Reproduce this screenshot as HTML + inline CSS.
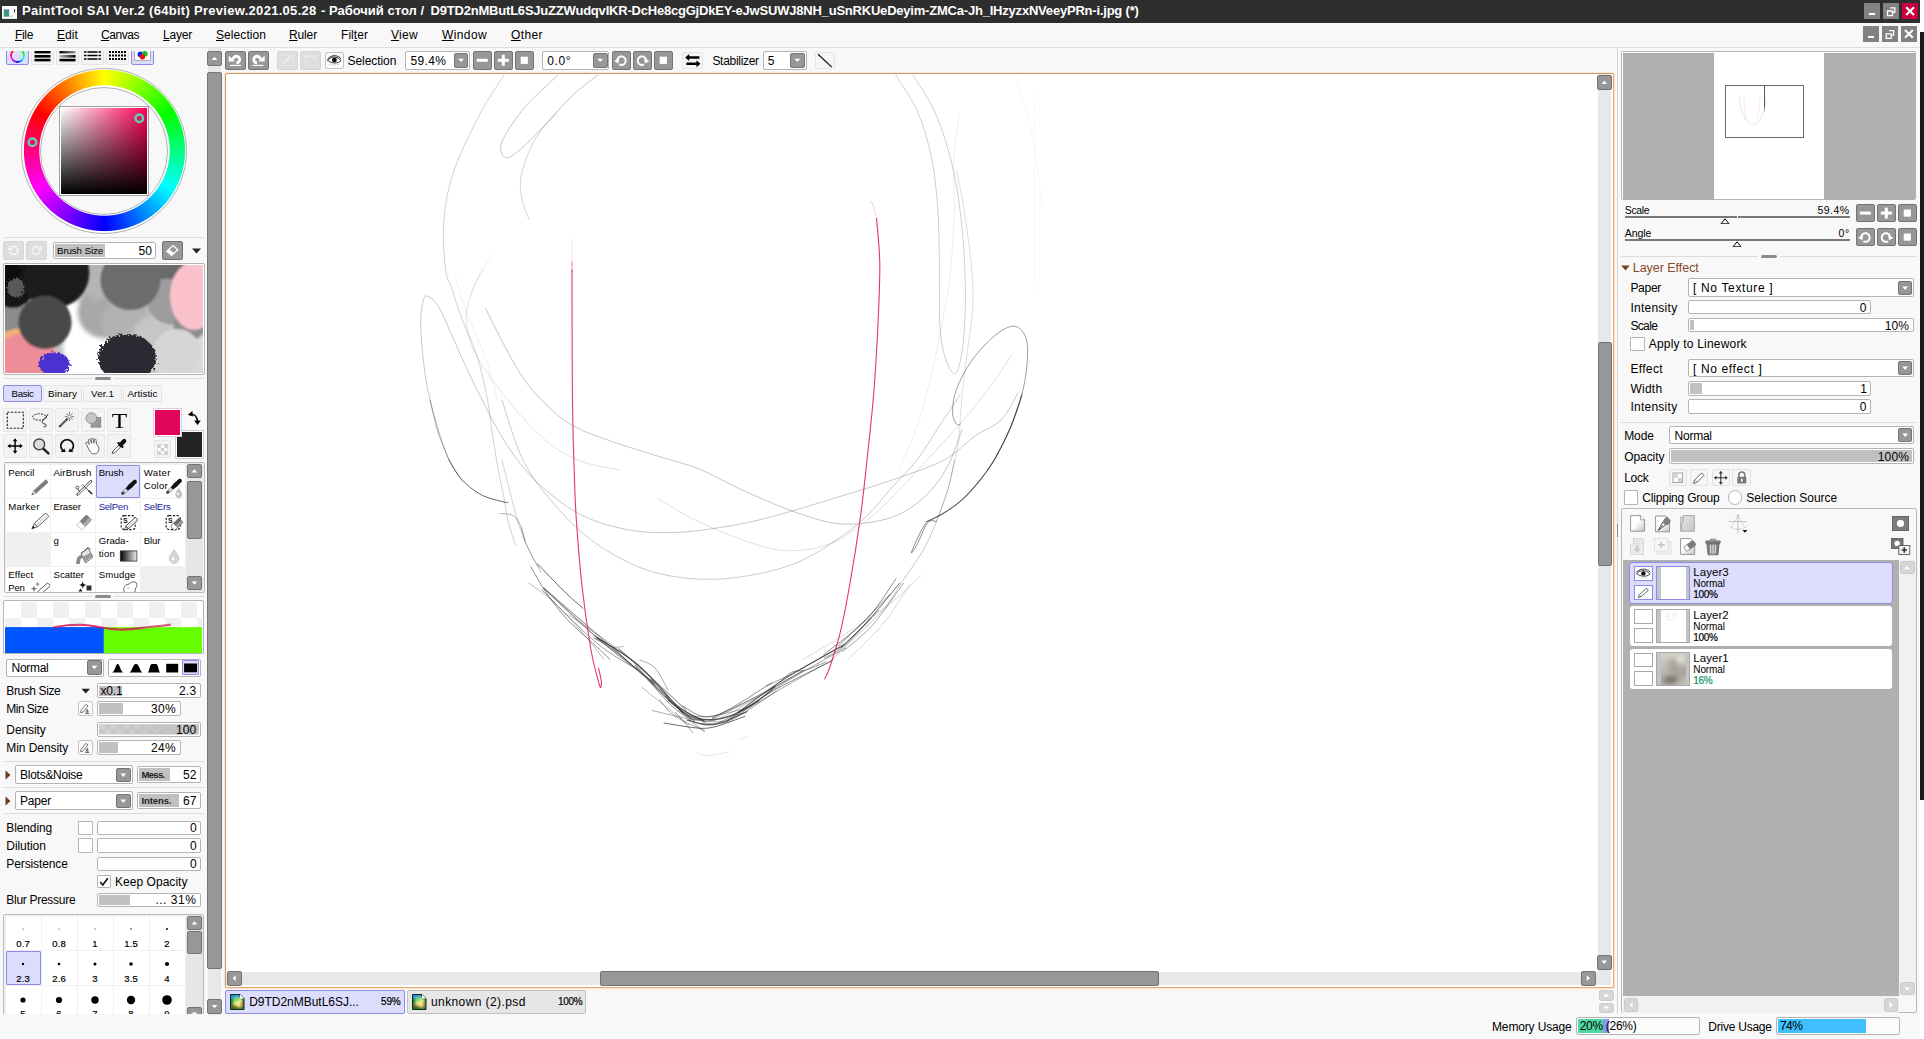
<!DOCTYPE html>
<html><head><meta charset="utf-8"><title>PaintTool SAI</title>
<style>
*{box-sizing:border-box;margin:0;padding:0}
html,body{width:1924px;height:1039px;overflow:hidden;background:#f8f8f8;font-family:"Liberation Sans",sans-serif;font-size:12px;color:#000}
div,svg{position:absolute}
.t{white-space:nowrap;line-height:14px;font-size:12px}
.b{font-weight:bold}
.btn{background:#979797;border:1px solid #747474;border-radius:2px}
.btnl{background:#dedede;border:1px solid #d6d6d6;border-radius:2px}
.sl{background:#fff;border:1px solid #b4b4b4;border-radius:2px}
.slf{background:#c0c0c0}
.dd{background:#fff;border:1px solid #b4b4b4;border-radius:2px}
.cb{background:#fff;border:1px solid #b4b4b4;border-radius:1px}
.sep{background:#dcdcdc}
.sel{background:#dcdcfc;border:1px solid #8c8ce6;border-radius:2px}
.tb{background:#f4f4f4;border:1px solid #e4e4e4;border-radius:2px}
</style></head>
<body>
<!-- sec_top -->
<div class="" style="left:0px;top:0px;width:1920px;height:22.5px;background:#2e2e2e"></div>
<svg style="left:1.9px;top:5.9px;" width="15" height="12.9" viewBox="0 0 15 12.9"><defs><linearGradient id="aig" x1="0" y1="0" x2="0" y2="1"><stop offset="0" stop-color="#4a80a8"/><stop offset=".5" stop-color="#3a9a80"/><stop offset="1" stop-color="#3aa070"/></linearGradient></defs><rect width="15" height="12.900" fill="#fafafa"/><rect x="1.800" y="3.400" width="5.400" height="7.300" fill="url(#aig)"/><rect x="12.100" y="3.100" width="1" height="3.500" fill="#333"/><rect x="8" y="9.500" width="3" height="1.200" fill="#ccc"/></svg>
<div class="t " style="left:22px;top:3px;font-size:13px;letter-spacing:0.294px;font-weight:bold;color:#fff;line-height:16px">PaintTool SAI Ver.2 (64bit) Preview.2021.05.28</div>
<div class="t " style="left:321px;top:3px;font-size:13px;letter-spacing:0.001px;font-weight:bold;color:#fff;line-height:16px">- Рабочий стол /</div>
<div class="t " style="left:430.6px;top:3px;font-size:13px;letter-spacing:-0.207px;font-weight:bold;color:#fff;line-height:16px">D9TD2nMButL6SJuZZWudqvIKR-DcHe8cgGjDkEY-eJwSUWJ8NH_uSnRKUeDeyim-ZMCa-Jh_IHzyzxNVeeyPRn-i.jpg (*)</div>
<div class="" style="left:1864px;top:3px;width:16.2px;height:16px;background:#828282"></div>
<div class="" style="left:1883px;top:3px;width:16.2px;height:16px;background:#828282"></div>
<div class="" style="left:1902px;top:3px;width:16.2px;height:16px;background:#c9003f"></div>
<div class="" style="left:1869px;top:12.8px;width:6.2px;height:2.5px;background:#fff"></div>
<svg style="left:1883px;top:3px;" width="16.2" height="16" viewBox="0 0 16.2 16"><path d="M7.200 4.800h4.600v4.600h-1.800M4.500 8h5v4.600h-5z" fill="none" stroke="#fff" stroke-width="1.300"/></svg>
<svg style="left:1902px;top:3px;" width="16.2" height="16" viewBox="0 0 16.2 16"><path d="M4.200 4.300l7.800 7.800M12 4.300l-7.800 7.800" stroke="#fff" stroke-width="2.100"/></svg>
<div class="" style="left:0px;top:22.5px;width:1920px;height:24.5px;background:#f8f8f8"></div>
<div class="" style="left:0px;top:47px;width:1920px;height:1px;background:#dedede"></div>
<div class="t " style="left:15px;top:28px;font-size:12px;letter-spacing:-0.334px;line-height:15px"><u>F</u>ile</div>
<div class="t " style="left:57px;top:28px;font-size:12px;letter-spacing:0.081px;line-height:15px"><u>E</u>dit</div>
<div class="t " style="left:101px;top:28px;font-size:12px;letter-spacing:-0.448px;line-height:15px"><u>C</u>anvas</div>
<div class="t " style="left:163px;top:28px;font-size:12px;letter-spacing:-0.203px;line-height:15px"><u>L</u>ayer</div>
<div class="t " style="left:216px;top:28px;font-size:12px;letter-spacing:0.071px;line-height:15px"><u>S</u>election</div>
<div class="t " style="left:289px;top:28px;font-size:12px;letter-spacing:-0.135px;line-height:15px"><u>R</u>uler</div>
<div class="t " style="left:341px;top:28px;font-size:12px;letter-spacing:0.056px;line-height:15px">Fil<u>t</u>er</div>
<div class="t " style="left:391px;top:28px;font-size:12px;letter-spacing:0.302px;line-height:15px"><u>V</u>iew</div>
<div class="t " style="left:442px;top:28px;font-size:12px;letter-spacing:0.387px;line-height:15px"><u>W</u>indow</div>
<div class="t " style="left:511px;top:28px;font-size:12px;letter-spacing:0.398px;line-height:15px"><u>O</u>ther</div>
<div class="" style="left:1863.1px;top:26.2px;width:15.9px;height:15.6px;background:#828282"></div>
<div class="" style="left:1882.2px;top:26.2px;width:15.9px;height:15.6px;background:#828282"></div>
<div class="" style="left:1901.1px;top:26.2px;width:15.9px;height:15.6px;background:#828282"></div>
<div class="" style="left:1868px;top:35.5px;width:6.2px;height:2.5px;background:#fff"></div>
<svg style="left:1882.2px;top:26.2px;" width="15.9" height="15.6" viewBox="0 0 15.9 15.6"><path d="M7 4.600h4.600v4.600h-1.800M4.300 7.800h5v4.600h-5z" fill="none" stroke="#fff" stroke-width="1.300"/></svg>
<svg style="left:1901.1px;top:26.2px;" width="15.9" height="15.6" viewBox="0 0 15.9 15.6"><path d="M4 4l7.800 7.800M11.800 4l-7.800 7.800" stroke="#fff" stroke-width="2.100"/></svg>
<div class="" style="left:1920px;top:0px;width:4px;height:1039px;background:#fff"></div>
<div class="" style="left:1920.1px;top:32px;width:4px;height:767.7px;background:#1a1a1a"></div>
<!-- sec_left -->
<div style="left:0;top:51px;width:206px;height:963px;overflow:hidden"><div style="left:0;top:-51px;width:206px;height:1039px">
<div class="sel" style="left:6px;top:43px;width:23px;height:22px;"></div>
<div class="tb" style="left:31px;top:43px;width:23px;height:22px;"></div>
<div class="tb" style="left:56px;top:43px;width:23px;height:22px;"></div>
<div class="tb" style="left:81px;top:43px;width:23px;height:22px;"></div>
<div class="tb" style="left:106px;top:43px;width:23px;height:22px;"></div>
<div class="sel" style="left:131px;top:43px;width:23px;height:22px;"></div>
<div class="" style="left:10px;top:47.5px;width:15px;height:15px;border-radius:50%;background:conic-gradient(#ff0,#0f0,#0ff,#00f,#f0f,#f00,#ff0);-webkit-mask-image:radial-gradient(circle closest-side,transparent 5.300px,#000 5.900px);mask-image:radial-gradient(circle closest-side,transparent 5.300px,#000 5.900px)"></div>
<svg style="left:34px;top:49.7px;" width="17" height="12" viewBox="0 0 17 12"><defs><linearGradient id="g1" x1="0" x2="1"><stop offset="0" stop-color="#000"/><stop offset="1" stop-color="#000"/></linearGradient></defs><rect x="0.5" y="1" width="16" height="2.4" fill="#000"/><rect x="0.5" y="5" width="16" height="2.6" fill="#000"/><rect x="0.5" y="8.8" width="16" height="2.6" fill="#000"/></svg>
<svg style="left:59px;top:49.7px;" width="17" height="12" viewBox="0 0 17 12"><defs><linearGradient id="g2" x1="0" x2="1"><stop offset="0" stop-color="#000"/><stop offset="1" stop-color="#999"/></linearGradient><linearGradient id="g3" x1="0" x2="1"><stop offset="0" stop-color="#bbb"/><stop offset="1" stop-color="#000"/></linearGradient></defs><rect x="0.5" y="1" width="16" height="2.4" fill="url(#g2)"/><rect x="0.5" y="5" width="16" height="2.6" fill="url(#g3)"/><rect x="0.5" y="8.8" width="16" height="2.6" fill="#000"/></svg>
<svg style="left:84px;top:49.7px;" width="17" height="12" viewBox="0 0 17 12"><g stroke="#000" stroke-width="1.6"><path d="M0 2h17M0 5.5h17M0 9h17" stroke-dasharray="2.5 1 10 1 2.5 0"/></g></svg>
<svg style="left:109px;top:49.7px;" width="17" height="12" viewBox="0 0 17 12"><g fill="#000"><rect x="0" y="1" width="2" height="2"/><rect x="3" y="1" width="2" height="2"/><rect x="6" y="1" width="2" height="2"/><rect x="9" y="1" width="2" height="2"/><rect x="12" y="1" width="2" height="2"/><rect x="15" y="1" width="2" height="2"/><rect x="0" y="4.5" width="2" height="2"/><rect x="3" y="4.5" width="2" height="2"/><rect x="6" y="4.5" width="2" height="2"/><rect x="9" y="4.5" width="2" height="2"/><rect x="12" y="4.5" width="2" height="2"/><rect x="15" y="4.5" width="2" height="2"/><rect x="0" y="8" width="2" height="2"/><rect x="3" y="8" width="2" height="2"/><rect x="6" y="8" width="2" height="2"/><rect x="9" y="8" width="2" height="2"/><rect x="12" y="8" width="2" height="2"/><rect x="15" y="8" width="2" height="2"/></g></svg>
<svg style="left:134px;top:45px;" width="17" height="16.5" viewBox="0 0 17 16.5"><defs><filter id="rgbb"><feGaussianBlur stdDeviation=".5"/></filter></defs><rect x=".5" y="0" width="16" height="15.300" fill="#fff" stroke="#9a9a9a" stroke-width=".8"/><g filter="url(#rgbb)"><circle cx="6.500" cy="9.300" r="2.900" fill="#0020ee"/><circle cx="10.800" cy="8.800" r="2.900" fill="#18c030"/><circle cx="8.400" cy="11.800" r="2.700" fill="#f01010"/></g></svg>
<div class="" style="left:21.5px;top:68.0px;width:165.0px;height:165.0px;border-radius:50%;background:#fff"></div><div class="" style="left:40.5px;top:87.0px;width:127.0px;height:127.0px;border-radius:50%;background:#f8f8f8"></div><div class="" style="left:21.5px;top:68.0px;width:165.0px;height:165.0px;border-radius:50%;background:conic-gradient(from 0deg,#ffff00 0deg,#00ff00 60deg,#00ffff 120deg,#0000ff 180deg,#ff00ff 240deg,#ff0000 300deg,#ffff00 360deg);-webkit-mask-image:radial-gradient(circle closest-side,transparent 64.7px,#000 65.7px,#000 80.1px,transparent 81.1px);mask-image:radial-gradient(circle closest-side,transparent 64.7px,#000 65.7px,#000 80.1px,transparent 81.1px)"></div><div class="" style="left:21.0px;top:67.5px;width:166.0px;height:166.0px;border-radius:50%;border:1px solid #a8a8a8;opacity:.9"></div><div class="" style="left:40.0px;top:86.5px;width:128.0px;height:128.0px;border-radius:50%;border:1px solid #a8a8a8;opacity:.9"></div><div class="" style="left:59px;top:106px;width:90px;height:90px;background:#fff;border:1px solid #a0a0a0"></div><div class="" style="left:61px;top:108px;width:86px;height:86px;background:linear-gradient(to bottom,rgba(0,0,0,0) 0%,rgba(0,0,0,.55) 55%,#000 100%),linear-gradient(to right,#fff 0%,#ff0058 100%)"></div><svg style="left:132px;top:111px;" width="14" height="14" viewBox="0 0 14 14"><circle cx="7.300" cy="7.300" r="3.800" fill="none" stroke="#5ccfae" stroke-width="2.500"/></svg><svg style="left:25px;top:135px;" width="14" height="14" viewBox="0 0 14 14"><circle cx="7.400" cy="7.300" r="3.800" fill="none" stroke="#5ccfae" stroke-width="2.500"/></svg>
<div class="sep" style="left:4px;top:237.2px;width:200px;height:1px;"></div>
<div class="btnl" style="left:3.3px;top:241.1px;width:20.4px;height:18.5px;"></div>
<div class="btnl" style="left:26.3px;top:241.1px;width:20.4px;height:18.5px;"></div>
<svg style="left:6px;top:243px;" width="15" height="14" viewBox="0 0 15 14"><path d="M4 8.5a4 4 0 1 0 1.5-4.2M3.2 3.2v3h3" fill="none" stroke="#f7f7f7" stroke-width="1.5"/></svg>
<svg style="left:29px;top:243px;" width="15" height="14" viewBox="0 0 15 14"><path d="M11 8.5a4 4 0 1 1-1.5-4.2M11.8 3.2v3h-3" fill="none" stroke="#f7f7f7" stroke-width="1.5"/></svg>
<div class="sl" style="left:53px;top:242.2px;width:103px;height:16.5px;"></div>
<div class="slf" style="left:55px;top:244.2px;width:50px;height:12.5px;"></div>
<div class="t " style="left:57px;top:243.6px;font-size:9.8px;letter-spacing:-0.139px;line-height:14px">Brush Size</div>
<div class="t " style="left:152px;top:243.9px;transform:translateX(-100%);font-size:12px;letter-spacing:0.077px;margin-right:-0.077px;">50</div>
<div class="btn" style="left:162.1px;top:241.1px;width:20.8px;height:18.6px;"></div>
<svg style="left:162.1px;top:241.1px;" width="20.8" height="18.6" viewBox="0 0 20.8 18.6"><path d="M4.800 10.200l6.300-5.600 4.800 4.200-6.300 5.600z" fill="none" stroke="#fff" stroke-width="1.300"/><path d="M4.800 10.200l2.400-2.100 4.800 4.200-2.400 2.100z" fill="#fff"/></svg>
<svg style="left:191px;top:246.9px;" width="11" height="8" viewBox="0 0 11 8"><path d="M1 1.5h9l-4.5 5z" fill="#222"/></svg>
<div class="" style="left:3px;top:263px;width:202px;height:112px;background:#fff;border:1px solid #b4b4b4;border-radius:2px"></div>
<svg style="left:5px;top:265px;" width="198" height="108" viewBox="0 0 198 108"><defs><filter id="bl6" x="-30%" y="-30%" width="160%" height="160%"><feGaussianBlur stdDeviation="2.200"/></filter><filter id="bl2" x="-30%" y="-30%" width="160%" height="160%"><feGaussianBlur stdDeviation="1.100"/></filter>
<filter id="rough" x="-20%" y="-20%" width="140%" height="140%"><feTurbulence type="fractalNoise" baseFrequency="0.450" numOctaves="2" seed="3"/><feDisplacementMap in="SourceGraphic" scale="8"/></filter></defs>
<rect width="198" height="108" fill="#c4c4c4"/>
<g filter="url(#bl6)">
<rect x="60" y="36" width="50" height="80" fill="#ffffff"/><ellipse cx="120" cy="70" rx="30" ry="14" fill="#e6e6e6"/>
<ellipse cx="84" cy="80" rx="26" ry="34" fill="#ffffff"/>
<circle cx="99" cy="47" r="26.500" fill="#a8a8a8"/>
<circle cx="122" cy="58" r="25" fill="#b2b2b2"/>
<ellipse cx="92" cy="14" rx="12" ry="22" fill="#b4b4b4"/>
<circle cx="175" cy="88" r="30" fill="#dadada"/>
<circle cx="150" cy="72" r="22" fill="#c6c6c6"/>
</g>
<g filter="url(#bl2)">
<circle cx="166" cy="35.400" r="24" fill="#9c9c9c"/>
<circle cx="184.400" cy="59.700" r="16" fill="#8e8e8e"/>
<circle cx="172" cy="88" r="24" fill="#d6d6d6"/>
<rect x="140" y="-4" width="40" height="18" fill="#6a6a6a"/>
<circle cx="125.500" cy="15" r="30" fill="#6c6c6c"/>
<ellipse cx="189" cy="30.800" rx="24" ry="34" fill="#fbc2cd"/>
<rect x="-4" y="40" width="22" height="30" fill="#8c8c8c"/>
<circle cx="17" cy="99" r="36" fill="#f0b274"/>
<circle cx="20" cy="103" r="35" fill="#ee8c98"/>
<circle cx="7.700" cy="22" r="21" fill="#151515"/>
<circle cx="49.300" cy="8" r="35" fill="#1c1c1c"/>
<circle cx="4" cy="4" r="14" fill="#0c0c0c" filter="url(#bl6)"/>
<circle cx="40" cy="57.400" r="26.600" fill="#484848"/>
</g>
<g filter="url(#rough)"><ellipse cx="10.600" cy="22.700" rx="8.500" ry="10" fill="#595959"/><ellipse cx="49.300" cy="99" rx="15.500" ry="11.500" fill="#4a30d0"/><ellipse cx="122" cy="93" rx="29" ry="24" fill="#2b2b33"/></g>
</svg>
<div class="sep" style="left:4px;top:378px;width:200px;height:1px;"></div>
<div class="" style="left:95px;top:377px;width:16px;height:3px;background:#8c8c8c;border-radius:1.500px;box-shadow:3px 0 0 #f8f8f8,-3px 0 0 #f8f8f8"></div>
<div class="sel" style="left:3px;top:385px;width:39px;height:17px;"></div>
<div class="t " style="left:11.5px;top:386.7px;font-size:9.8px;letter-spacing:-0.393px;line-height:14px">Basic</div>
<div class="tb" style="left:43px;top:385px;width:39px;height:17px;"></div>
<div class="t " style="left:48.0px;top:386.7px;font-size:9.8px;letter-spacing:0.204px;line-height:14px">Binary</div>
<div class="tb" style="left:83px;top:385px;width:39px;height:17px;"></div>
<div class="t " style="left:91.0px;top:386.7px;font-size:9.8px;letter-spacing:0.132px;line-height:14px">Ver.1</div>
<div class="tb" style="left:123px;top:385px;width:39px;height:17px;"></div>
<div class="t " style="left:127.5px;top:386.7px;font-size:9.8px;letter-spacing:0.075px;line-height:14px">Artistic</div>
<div class="tb" style="left:3.4px;top:408.4px;width:24px;height:24px;background:#f3f3f3;border-color:#e6e6e6"></div><div class="tb" style="left:29.4px;top:408.4px;width:24px;height:24px;background:#f3f3f3;border-color:#e6e6e6"></div><div class="tb" style="left:55.4px;top:408.4px;width:24px;height:24px;background:#f3f3f3;border-color:#e6e6e6"></div><div class="tb" style="left:81.4px;top:408.4px;width:24px;height:24px;background:#f3f3f3;border-color:#e6e6e6"></div><div class="tb" style="left:107.4px;top:408.4px;width:24px;height:24px;background:#f3f3f3;border-color:#e6e6e6"></div><div class="tb" style="left:3.4px;top:434.4px;width:24px;height:24px;background:#f3f3f3;border-color:#e6e6e6"></div><div class="tb" style="left:29.4px;top:434.4px;width:24px;height:24px;background:#f3f3f3;border-color:#e6e6e6"></div><div class="tb" style="left:55.4px;top:434.4px;width:24px;height:24px;background:#f3f3f3;border-color:#e6e6e6"></div><div class="tb" style="left:81.4px;top:434.4px;width:24px;height:24px;background:#f3f3f3;border-color:#e6e6e6"></div><div class="tb" style="left:107.4px;top:434.4px;width:24px;height:24px;background:#f3f3f3;border-color:#e6e6e6"></div><svg style="left:3.4px;top:408.4px;" width="24" height="24" viewBox="0 0 24 24"><rect x="4.3" y="4.3" width="16" height="16" fill="none" stroke="#222" stroke-width="1.1" stroke-dasharray="2.2 1.4"/></svg><svg style="left:29.4px;top:408.4px;" width="24" height="24" viewBox="0 0 24 24"><ellipse cx="10.4" cy="9" rx="6.8" ry="3.2" fill="none" stroke="#222" stroke-width="1" stroke-dasharray="2 1.2"/><path d="M19 6.2C17.5 9 15.5 10.5 14 12.5c-1.6 2 -0.5 3 1.2 3.3 1.6 .3 2.6 1.4 1.6 2.6-.5.6-1.4.6-2.2.3" fill="none" stroke="#222" stroke-width="1"/></svg><svg style="left:55.4px;top:408.4px;" width="24" height="24" viewBox="0 0 24 24"><path d="M4.3 18.9L12.6 10.6" stroke="#222" stroke-width="2"/><path d="M5.5 17.7l6-6" stroke="#bbb" stroke-width=".7"/><g stroke="#555" stroke-width=".8"><path d="M14.4 4v2.8M14.4 10.6v2.6M9.8 8.7h2.6M16.4 8.7h2.8M11.3 5.6l1.6 1.6M17.5 5.6l-1.6 1.6M17.5 11.8l-1.6-1.6"/></g><circle cx="14.4" cy="8.7" r="1.5" fill="#fff" stroke="#666" stroke-width=".7"/></svg><svg style="left:81.4px;top:408.4px;" width="24" height="24" viewBox="0 0 24 24"><rect x="10.2" y="9.6" width="9.5" height="9.5" fill="#999" stroke="#7a7a7a" stroke-width=".8"/><circle cx="10.4" cy="10.2" r="5.4" fill="#c6c6c6" stroke="#8a8a8a" stroke-width=".9"/></svg><div class="t" style="left:113.100px;top:408.900px;font-family:'Liberation Serif',serif;font-size:21.500px;line-height:24px;color:#000;transform:scaleX(1.180);transform-origin:50% 50%">T</div><svg style="left:3.4px;top:434.4px;" width="24" height="24" viewBox="0 0 24 24"><path d="M12.100 6v12M6.100 12h12" stroke="#000" stroke-width="1.400"/><path d="M12.100 4.300l2.300 3h-4.600zM12.100 19.700l2.300-3h-4.600zM4.400 12l3-2.300v4.600zM19.800 12l-3-2.300v4.600z" fill="#000"/></svg><svg style="left:29.4px;top:434.4px;" width="24" height="24" viewBox="0 0 24 24"><path d="M14 14.4l5.4 5" stroke="#222" stroke-width="2.6" stroke-linecap="round"/><circle cx="10.2" cy="10.4" r="5.4" fill="#dcdcdc" stroke="#444" stroke-width="1.4"/></svg><svg style="left:55.4px;top:434.4px;" width="24" height="24" viewBox="0 0 24 24"><path d="M8.900 17.300A6.300 6.300 0 1 1 15.300 17.300" fill="none" stroke="#111" stroke-width="1.800"/><path d="M5.600 17.900l5.200.2-1.300-3.700zM18.600 17.900l-5.200.2 1.300-3.700z" fill="#111"/></svg><svg style="left:81.4px;top:434.4px;" width="24" height="24" viewBox="0 0 24 24"><path d="M6 11.5c-1-1.5-1.5-3 -.6-3.4 1-.4 2.2 1.4 3 2.4L7.4 6.6c-.4-1.2 1.2-1.8 1.8-.6l1.6 3.4-.8-4.2c-.2-1.2 1.5-1.5 1.9-.3l1.1 4.2.1-3.5c0-1.1 1.6-1.1 1.8 0l.6 4.4c1.6 1.6 2.6 3.6 2.3 5.8-.2 1.8-1.4 3.4-3.4 4-1.8.5-3.6-.2-4.8-1.6C8 16.400 7 13.400 6 11.500z" fill="#fff" stroke="#555" stroke-width=".9" stroke-linejoin="round"/></svg><svg style="left:107.4px;top:434.4px;" width="24" height="24" viewBox="0 0 24 24"><path d="M5 19.5l1-2.5 6.5-6.5 1.8 1.8L7.800 18.800z" fill="#fff" stroke="#444" stroke-width=".9"/><path d="M11.5 9l4 4" stroke="#111" stroke-width="2.2" stroke-linecap="round"/><path d="M13.6 10.700l3.600-3.600" stroke="#111" stroke-width="4.200" stroke-linecap="round"/></svg><div class="" style="left:175.4px;top:430.2px;width:28.4px;height:28.4px;background:#fff;border:1px solid #cfcfcf"></div><div class="" style="left:177.4px;top:432.2px;width:24.4px;height:24.4px;background:#232323"></div><div class="" style="left:153.4px;top:408.3px;width:28.4px;height:28.4px;background:#fff;border:1px solid #dccfd5"></div><div class="" style="left:155.4px;top:410.3px;width:24.4px;height:24.4px;background:#e0055a"></div><svg style="left:186px;top:409px;" width="16" height="17" viewBox="0 0 16 17"><path d="M3.500 5.500C8 4.500 11.500 7.500 11.500 12.500" fill="none" stroke="#000" stroke-width="1.500"/><path d="M1.800 5.800l4.600-3.800.6 5.600zM11.500 16l-3.300-4.600h6.600z" fill="#000"/></svg><div class="tb" style="left:154px;top:440.4px;width:17px;height:17.6px;background:#f4f4f4"></div><svg style="left:157px;top:444px;" width="11" height="11" viewBox="0 0 11 11"><rect width="11" height="11" fill="#fff" stroke="#bbb" stroke-width="1"/><rect x="0.5" y="0.5" width="3.4" height="3.4" fill="#ccc"/><rect x="7.200" y="0.500" width="3.300" height="3.400" fill="#ccc"/><rect x="3.900" y="3.900" width="3.300" height="3.300" fill="#ccc"/><rect x="0.500" y="7.200" width="3.400" height="3.300" fill="#ccc"/><rect x="7.200" y="7.200" width="3.300" height="3.300" fill="#ccc"/></svg><div class="" style="left:3.5px;top:462.4px;width:201px;height:130.2px;background:#f8f8f8;border:1px solid #b9b9b9;border-radius:2px"></div><div style="left:4.5px;top:463.4px;width:199px;height:128.200px;overflow:hidden;background:#f0f0f0"><div style="left:-4.5px;top:-463.4px;width:206px;height:700px"><div class="" style="left:5.5px;top:464.5px;width:44.5px;height:33.3px;background:#fff"></div><div class="" style="left:50.7px;top:464.5px;width:44.5px;height:33.3px;background:#fff"></div><div class="" style="left:95.9px;top:464.5px;width:44.5px;height:33.3px;background:#fff"></div><div class="" style="left:140.9px;top:464.5px;width:44.5px;height:33.3px;background:#fff"></div><div class="" style="left:5.5px;top:498.5px;width:44.5px;height:33.3px;background:#fff"></div><div class="" style="left:50.7px;top:498.5px;width:44.5px;height:33.3px;background:#fff"></div><div class="" style="left:95.9px;top:498.5px;width:44.5px;height:33.3px;background:#fff"></div><div class="" style="left:140.9px;top:498.5px;width:44.5px;height:33.3px;background:#fff"></div><div class="" style="left:50.7px;top:532.5px;width:44.5px;height:33.3px;background:#fff"></div><div class="" style="left:95.9px;top:532.5px;width:44.5px;height:33.3px;background:#fff"></div><div class="" style="left:140.9px;top:532.5px;width:44.5px;height:33.3px;background:#fff"></div><div class="" style="left:5.5px;top:566.5px;width:44.5px;height:33.3px;background:#fff"></div><div class="" style="left:50.7px;top:566.5px;width:44.5px;height:33.3px;background:#fff"></div><div class="" style="left:95.9px;top:566.5px;width:44.5px;height:33.3px;background:#fff"></div><div class="sel" style="left:95.9px;top:464.5px;width:44.5px;height:33.3px;border-radius:1px"></div><div class="t " style="left:8.3px;top:466.2px;font-size:9.6px;letter-spacing:-0.024px;line-height:13px;color:#000">Pencil</div><div class="t " style="left:53.5px;top:466.2px;font-size:9.6px;letter-spacing:0.149px;line-height:13px;color:#000">AirBrush</div><div class="t " style="left:98.7px;top:466.2px;font-size:9.6px;letter-spacing:-0.015px;line-height:13px;color:#000">Brush</div><div class="t " style="left:143.70000000000002px;top:466.2px;font-size:9.6px;letter-spacing:0.351px;line-height:13px;color:#000">Water</div><div class="t " style="left:143.70000000000002px;top:479.2px;font-size:9.6px;letter-spacing:0.272px;line-height:13px;color:#000">Color</div><div class="t " style="left:8.3px;top:500.2px;font-size:9.6px;letter-spacing:0.239px;line-height:13px;color:#000">Marker</div><div class="t " style="left:53.5px;top:500.2px;font-size:9.6px;letter-spacing:-0.162px;line-height:13px;color:#000">Eraser</div><div class="t " style="left:98.7px;top:500.2px;font-size:9.6px;letter-spacing:-0.276px;line-height:13px;color:#1c1c9c">SelPen</div><div class="t " style="left:143.70000000000002px;top:500.2px;font-size:9.6px;letter-spacing:-0.246px;line-height:13px;color:#1c1c9c">SelErs</div><div class="t " style="left:53.5px;top:534.2px;font-size:9.600px;line-height:13px;color:#000">g</div><div class="t " style="left:98.7px;top:534.2px;font-size:9.6px;letter-spacing:0.021px;line-height:13px;color:#000">Grada-</div><div class="t " style="left:98.7px;top:547.2px;font-size:9.6px;letter-spacing:0.206px;line-height:13px;color:#000">tion</div><div class="t " style="left:143.70000000000002px;top:534.2px;font-size:9.6px;letter-spacing:-0.068px;line-height:13px;color:#000">Blur</div><div class="t " style="left:8.3px;top:568.2px;font-size:9.6px;letter-spacing:0.105px;line-height:13px;color:#000">Effect</div><div class="t " style="left:8.3px;top:581.2px;font-size:9.6px;letter-spacing:-0.260px;line-height:13px;color:#000">Pen</div><div class="t " style="left:53.5px;top:568.2px;font-size:9.6px;letter-spacing:0.013px;line-height:13px;color:#000">Scatter</div><div class="t " style="left:98.7px;top:568.2px;font-size:9.6px;letter-spacing:0.174px;line-height:13px;color:#000">Smudge</div><svg style="left:5.5px;top:464.5px;" width="44.5" height="33.3" viewBox="0 0 44.5 33.3"><g transform="translate(25.600 29.900) rotate(-42)"><path d="M0 0l4.500-1.700v3.400z" fill="#e8e8e8" stroke="#666" stroke-width=".5"/><path d="M0 0l1.800-.7v1.400z" fill="#222"/><rect x="4.500" y="-1.700" width="16.500" height="3.400" fill="#a8a8a8"/><path d="M4.500 -0.500h16.500M4.500 0.700h16.500" stroke="#333" stroke-width=".6"/><path d="M4.500 -1.700h16.500M4.500 1.700h16.500" stroke="#555" stroke-width=".55"/></g></svg><svg style="left:50.7px;top:464.5px;" width="44.5" height="33.3" viewBox="0 0 44.5 33.3"><path d="M26.600 29.400l13.300-13" stroke="#333" stroke-width="2.600" stroke-linecap="round"/><path d="M26.800 29.200l13-12.700" stroke="#fff" stroke-width="1.200" stroke-linecap="round"/><path d="M33.300 21.500l7.300 7" stroke="#333" stroke-width=".9" stroke-linecap="round"/><path d="M38 26l2.800 2.700" stroke="#222" stroke-width="1.500" stroke-linecap="round"/><circle cx="26.400" cy="22.600" r="1.500" fill="#fff" stroke="#333" stroke-width=".8"/><path d="M27 24l1.500 2.800M30 20.300l1 1M31.800 19.300l.3 1.400" stroke="#333" stroke-width=".8"/></svg><svg style="left:95.9px;top:464.5px;" width="44.5" height="33.3" viewBox="0 0 44.5 33.3"><g transform="translate(25.6 29.4) rotate(-43.500)"><rect x="0" y="-1.500" width="3.500" height="3" rx="1.400" fill="#444"/><rect x="3.300" y="-1.600" width="4" height="3.200" fill="#d8d8d8" stroke="#555" stroke-width=".5"/><path d="M7.300 -1.700L12 -2.300L19.500 -1.900Q21 0 19.500 1.900L12 2.300L7.300 1.700z" fill="#111"/></g></svg><svg style="left:140.9px;top:464.5px;" width="44.5" height="33.3" viewBox="0 0 44.5 33.3"><g transform="translate(25.6 28.4) rotate(-43.500)"><rect x="0" y="-1.500" width="3.500" height="3" rx="1.400" fill="#444"/><rect x="3.300" y="-1.600" width="4" height="3.200" fill="#d8d8d8" stroke="#555" stroke-width=".5"/><path d="M7.300 -1.700L12 -2.300L19.500 -1.900Q21 0 19.500 1.900L12 2.300L7.300 1.700z" fill="#111"/></g><path d="M37.700 23.500c1.700 2.500 3 4.200 3 6a3 3 0 0 1-6 0c0-1.800 1.300-3.500 3-6z" fill="#c4c4c4" stroke="#aaa" stroke-width=".6"/><ellipse cx="36.800" cy="29" rx="1" ry="1.500" fill="#fff"/></svg><svg style="left:5.5px;top:498.5px;" width="44.5" height="33.3" viewBox="0 0 44.5 33.3"><g transform="translate(25.800 29.800) rotate(-42)"><path d="M0 0l5.500-2.400v4.800z" fill="#fff" stroke="#444" stroke-width=".7"/><path d="M0 0l3-1.300v2.600z" fill="#111"/><rect x="5.500" y="-2.400" width="15.500" height="4.800" rx="1" fill="#fff" stroke="#444" stroke-width=".8"/><path d="M6 .3h14.500" stroke="#999" stroke-width=".6"/></g></svg><svg style="left:50.7px;top:498.5px;" width="44.5" height="33.3" viewBox="0 0 44.5 33.3"><g transform="translate(25.500 25.900) rotate(-46)"><rect x="0" y="0" width="14.100" height="7.500" rx="1.400" fill="#fff" stroke="#b4b4b4" stroke-width=".7"/><path d="M4.800 0h8.300a1.200 1.200 0 0 1 1.200 1.200v5.100a1.200 1.200 0 0 1-1.200 1.200h-8.300z" fill="#7e7e7e"/><rect x="4.800" y="4" width="9.300" height="3.200" fill="#a8a8a8"/></g></svg><svg style="left:95.9px;top:498.5px;" width="44.5" height="33.3" viewBox="0 0 44.5 33.3"><rect x="25.200" y="16.600" width="14" height="14" rx="3" fill="#fff" stroke="#111" stroke-width="1.100" stroke-dasharray="2.200 1.500"/><text x="27" y="24.200" font-size="7" font-family="Liberation Sans" font-weight="bold" fill="#111">S</text><g transform="translate(28.300 31) rotate(-42.500)"><path d="M0 0l3.800-1.800v3.600z" fill="#fff" stroke="#222" stroke-width=".7"/><rect x="3.800" y="-1.900" width="13" height="3.800" rx="1" fill="#fff" stroke="#222" stroke-width=".8"/><path d="M5 0h10" stroke="#999" stroke-width=".5"/></g></svg><svg style="left:140.9px;top:498.5px;" width="44.5" height="33.3" viewBox="0 0 44.5 33.3"><rect x="25.200" y="16.600" width="14" height="14" rx="3" fill="#fff" stroke="#111" stroke-width="1.100" stroke-dasharray="2.200 1.500"/><text x="27" y="24.200" font-size="7" font-family="Liberation Sans" font-weight="bold" fill="#111">S</text><g transform="translate(29.400 27.300) rotate(-44)"><rect x="0" y="0" width="12" height="6" rx="1.100" fill="#fff" stroke="#444" stroke-width=".7"/><path d="M4 0h7a1 1 0 0 1 1 1v4a1 1 0 0 1-1 1h-7z" fill="#6e6e6e"/><rect x="4" y="3.200" width="8" height="2.500" fill="#a0a0a0"/></g></svg><svg style="left:50.7px;top:532.5px;" width="44.5" height="33.3" viewBox="0 0 44.5 33.3"><path d="M24.800 31l1.200-5.500c.5-2 2-2.800 4-3.500l3 1-3.500 3.500-.8 4.500z" fill="#8a8a8a"/><path d="M30 20.500l7-5.500 5 9-7.500 6z" fill="#e4e4e4" stroke="#555" stroke-width=".8"/><path d="M31.500 24l8.500-4.500 1.800 3.500-7.300 5.800z" fill="#999"/><path d="M30 20.500l7-5.500" stroke="#555" stroke-width="1"/><path d="M35.500 15.500c1.500-1.500 3.500-1 4 1.500" fill="none" stroke="#666" stroke-width=".8"/></svg><svg style="left:95.9px;top:532.5px;" width="44.5" height="33.3" viewBox="0 0 44.5 33.3"><defs><linearGradient id="gg" x1="0" x2="1"><stop offset="0" stop-color="#000"/><stop offset="1" stop-color="#eee"/></linearGradient></defs><rect x="24.300" y="17.900" width="16.600" height="10.200" fill="url(#gg)" stroke="#333" stroke-width=".8"/></svg><svg style="left:140.9px;top:532.5px;" width="44.5" height="33.3" viewBox="0 0 44.5 33.3"><path d="M33.100 16.500c2.600 4 4.800 6.500 4.800 9.200a4.800 4.800 0 0 1-9.600 0c0-2.700 2.200-5.200 4.800-9.200z" fill="#d6d6d6" stroke="#b8b8b8" stroke-width=".6"/><ellipse cx="32" cy="25.800" rx="1.300" ry="1.800" fill="#fff"/></svg><svg style="left:5.5px;top:566.5px;" width="44.5" height="33.3" viewBox="0 0 44.5 33.3"><g transform="translate(32.500 26.500) rotate(-41)"><rect x="0" y="-2" width="14" height="4" rx="1" fill="#fff" stroke="#444" stroke-width=".8"/></g><path d="M31.500 14.500l.7 1.900 1.900.7-1.900.7-.7 1.900-.7-1.900-1.900-.7 1.900-.7z" fill="#888"/><path d="M28 18.500l.9 2.300 2.300.9-2.300.9-.9 2.300-.9-2.300-2.300-.9 2.300-.9z" fill="#777"/></svg><svg style="left:50.7px;top:566.5px;" width="44.5" height="33.3" viewBox="0 0 44.5 33.3"><path d="M31.700 14.600l1 2.500 2.500 1-2.500 1-1 2.500-1-2.500-2.500-1 2.500-1z" fill="#111"/><rect x="35.500" y="18.500" width="5" height="5" fill="#333"/><path d="M27.500 24.500l2-3 2 3z" fill="#111"/></svg><svg style="left:95.9px;top:566.5px;" width="44.5" height="33.3" viewBox="0 0 44.5 33.3"><path d="M29 26c-2-3-1.500-6 .5-7.500 1.500-1.200 3.500-1 5-2.500 1.500-1.500 4.500-1.800 5.800-.2 1.300 1.700 .4 3.400-.5 5.200-.8 1.600-.8 3.500-1 5" fill="#fff" stroke="#555" stroke-width=".9"/><path d="M31 21.500c.8-.8 1.800-.8 2.500 0" stroke="#888" stroke-width=".6" fill="none"/></svg></div></div><div class="" style="left:186.4px;top:463.4px;width:17px;height:128.2px;background:#e6e6e6"></div><div class="btn" style="left:187.2px;top:464.4px;width:14.8px;height:14px;"></div><svg style="left:187.2px;top:464.4px;" width="14.8" height="14" viewBox="0 0 14.8 14"><path d="M4.550 8.600l2.850-3.300 2.850 3.300z" fill="#fff"/></svg><div class="btn" style="left:187.2px;top:480.5px;width:14.8px;height:58.5px;"></div><div class="btn" style="left:187.2px;top:576px;width:14.8px;height:14px;"></div><svg style="left:187.2px;top:576px;" width="14.8" height="14" viewBox="0 0 14.8 14"><path d="M4.550 5.400l2.850 3.300 2.850-3.300z" fill="#fff"/></svg>
<div class="sep" style="left:4px;top:596px;width:200px;height:1px;"></div><div class="" style="left:95px;top:594.7px;width:16px;height:3px;background:#8c8c8c;border-radius:1.500px;box-shadow:3px 0 0 #f8f8f8,-3px 0 0 #f8f8f8"></div><div class="" style="left:3.4px;top:600px;width:200.4px;height:54.3px;background:#fff;border:1px solid #b4b4b4;border-radius:2px"></div><svg style="left:5px;top:601.9px;" width="197.3" height="51" viewBox="0 0 197.3 51"><rect x="16" y="0" width="16" height="16" fill="#f0f0f0"/><rect x="48" y="0" width="16" height="16" fill="#f0f0f0"/><rect x="80" y="0" width="16" height="16" fill="#f0f0f0"/><rect x="112" y="0" width="16" height="16" fill="#f0f0f0"/><rect x="144" y="0" width="16" height="16" fill="#f0f0f0"/><rect x="176" y="0" width="16" height="16" fill="#f0f0f0"/><rect x="0" y="16" width="16" height="16" fill="#f0f0f0"/><rect x="32" y="16" width="16" height="16" fill="#f0f0f0"/><rect x="64" y="16" width="16" height="16" fill="#f0f0f0"/><rect x="96" y="16" width="16" height="16" fill="#f0f0f0"/><rect x="128" y="16" width="16" height="16" fill="#f0f0f0"/><rect x="160" y="16" width="16" height="16" fill="#f0f0f0"/><rect x="192" y="16" width="16" height="16" fill="#f0f0f0"/><rect x="0" y="25.100" width="98.900" height="26" fill="#0055ff"/><rect x="98.900" y="25.100" width="98.400" height="26" fill="#66ff00"/><defs><filter id="pvr" x="-5%" y="-50%" width="110%" height="200%"><feTurbulence type="fractalNoise" baseFrequency="0.9" numOctaves="1" seed="5"/><feDisplacementMap in="SourceGraphic" scale="1.600"/></filter></defs><g filter="url(#pvr)" fill="none" stroke-linecap="round"><path d="M49 25.200C58 23.500 66 22.300 76 22.800C88 23.600 96 25.600 106 26.800C118 28.200 128 27.300 140 25.600C150 24.300 158 23.800 165 22.800" stroke="#d81450" stroke-width="2" opacity=".8"/><path d="M56 24C66 22.300 80 22.600 92 24.600M102 27C114 28.800 126 28.300 136 26.600" stroke="#e02860" stroke-width="1.200" opacity=".55"/><path d="M140 25.600C150 24 160 23 168 21.500" stroke="#bbb" stroke-width=".8" opacity=".5"/></g></svg><div class="dd" style="left:6px;top:658.5px;width:97.6px;height:18.2px;"></div><div class="t " style="left:11.5px;top:660.6px;font-size:12px;letter-spacing:-0.278px;">Normal</div><div class="btn" style="left:87px;top:660.3px;width:14.8px;height:14.5px;"></div><svg style="left:87px;top:660.3px;" width="14.8" height="14.5" viewBox="0 0 14.8 14.5"><path d="M4.5 5.85h5.800l-2.900 3.300z" fill="#fff"/></svg><div class="dd" style="left:107.9px;top:658.5px;width:92.7px;height:18.2px;"></div><div class="sel" style="left:181.8px;top:660px;width:17px;height:14.6px;border-radius:1px"></div><svg style="left:107.9px;top:658.5px;" width="92.7" height="18.2" viewBox="0 0 92.7 18.2"><path d="M3.500 13.500C7 13.500 7.500 5 9.700 5S12.400 13.500 16 13.500z" fill="#000"/><path d="M21 13.500C24 13.500 24.500 5 28 5S32 13.500 35 13.500z" fill="#000"/><path d="M39.500 13.500C41.500 13.500 41.500 5 44 5h4C50.500 5 50.500 13.500 52.500 13.500z" fill="#000"/><rect x="58.200" y="4.800" width="12" height="8.700" fill="#000"/><rect x="76.100" y="4.500" width="13" height="8.800" fill="#000"/></svg><div class="t " style="left:6.3px;top:683.6px;font-size:12px;letter-spacing:-0.402px;">Brush Size</div><svg style="left:81px;top:687.5px;" width="10" height="6" viewBox="0 0 10 6"><path d="M.5 .8h8.500l-4.250 4.600z" fill="#222"/></svg><div class="sl" style="left:97.2px;top:683.3px;width:103.4px;height:14.3px;"></div><div class="slf" style="left:99.2px;top:685.5px;width:22.6px;height:10px;"></div><div class="t " style="left:100.6px;top:683.5px;font-size:12px;letter-spacing:-0.220px;">x0.1</div><div class="t " style="left:196.4px;top:683.5px;transform:translateX(-100%);font-size:12px;letter-spacing:0.273px;margin-right:-0.273px;">2.3</div><div class="t " style="left:6.3px;top:701.5px;font-size:12px;letter-spacing:-0.527px;">Min Size</div><div class="" style="left:78.4px;top:701.3px;width:14.4px;height:14.4px;background:#fbfbfb;border:1px solid #c4c4c4;border-radius:2px"></div><svg style="left:78.4px;top:701.3px;" width="14.4" height="14.4" viewBox="0 0 14.4 14.4"><path d="M3 9.500l5-6.200 2 1.600-5 6.200-2.400.6z" fill="#fff" stroke="#555" stroke-width=".8"/><path d="M9.200 8v2.400M7.800 9.800l1.400 1.600 1.400-1.600M7.200 12.300h4" stroke="#444" stroke-width="1" fill="none"/></svg><div class="sl" style="left:97.2px;top:701.3px;width:83.4px;height:14.3px;"></div><div class="slf" style="left:99.2px;top:703.3px;width:23.5px;height:10.3px;"></div><div class="t " style="left:176px;top:701.5px;transform:translateX(-100%);font-size:12px;letter-spacing:0.328px;margin-right:-0.328px;">30%</div><div class="t " style="left:6.3px;top:722.5px;font-size:12px;letter-spacing:-0.073px;">Density</div><div class="sl" style="left:97.2px;top:722.1px;width:103.4px;height:14.7px;"></div><svg style="left:99.2px;top:724.1px;" width="99.4" height="10.7" viewBox="0 0 99.400 10"><rect width="99.400" height="10" fill="#c8c8c8"/><rect x="0" y="0" width="6" height="5" fill="#d4d4d4"/><rect x="12" y="0" width="6" height="5" fill="#d4d4d4"/><rect x="24" y="0" width="6" height="5" fill="#d4d4d4"/><rect x="36" y="0" width="6" height="5" fill="#d4d4d4"/><rect x="48" y="0" width="6" height="5" fill="#d4d4d4"/><rect x="60" y="0" width="6" height="5" fill="#d4d4d4"/><rect x="72" y="0" width="6" height="5" fill="#d4d4d4"/><rect x="84" y="0" width="6" height="5" fill="#d4d4d4"/><rect x="96" y="0" width="6" height="5" fill="#d4d4d4"/><rect x="6" y="5" width="6" height="5" fill="#d4d4d4"/><rect x="18" y="5" width="6" height="5" fill="#d4d4d4"/><rect x="30" y="5" width="6" height="5" fill="#d4d4d4"/><rect x="42" y="5" width="6" height="5" fill="#d4d4d4"/><rect x="54" y="5" width="6" height="5" fill="#d4d4d4"/><rect x="66" y="5" width="6" height="5" fill="#d4d4d4"/><rect x="78" y="5" width="6" height="5" fill="#d4d4d4"/><rect x="90" y="5" width="6" height="5" fill="#d4d4d4"/><defs><linearGradient id="dg" x1="0" x2="1"><stop offset="0" stop-color="#c0c0c0" stop-opacity="0"/><stop offset="1" stop-color="#bdbdbd" stop-opacity="1"/></linearGradient></defs><rect width="99.400" height="10" fill="url(#dg)"/></svg><div class="t " style="left:196.4px;top:722.5px;transform:translateX(-100%);font-size:12px;letter-spacing:0.160px;margin-right:-0.160px;">100</div><div class="t " style="left:6.3px;top:740.5px;font-size:12px;letter-spacing:-0.062px;">Min Density</div><div class="" style="left:78.4px;top:740.4px;width:14.4px;height:14.4px;background:#fbfbfb;border:1px solid #c4c4c4;border-radius:2px"></div><svg style="left:78.4px;top:740.4px;" width="14.4" height="14.4" viewBox="0 0 14.4 14.4"><path d="M3 9.500l5-6.200 2 1.600-5 6.200-2.400.6z" fill="#fff" stroke="#555" stroke-width=".8"/><path d="M9.200 8v2.400M7.800 9.800l1.400 1.600 1.400-1.600M7.200 12.300h4" stroke="#444" stroke-width="1" fill="none"/></svg><div class="sl" style="left:97.2px;top:740.4px;width:83.4px;height:14.3px;"></div><div class="slf" style="left:99.2px;top:742.4px;width:18.5px;height:10.3px;"></div><div class="t " style="left:176px;top:740.5px;transform:translateX(-100%);font-size:12px;letter-spacing:0.328px;margin-right:-0.328px;">24%</div><div class="sep" style="left:4px;top:761px;width:200px;height:1px;"></div><svg style="left:5px;top:769.5px;" width="6" height="10" viewBox="0 0 6 10"><path d="M.5 .5v9l5-4.500z" fill="#6b3a1e"/></svg><div class="dd" style="left:15px;top:765px;width:117.5px;height:18.7px;"></div><div class="t " style="left:20px;top:767.5px;font-size:12px;letter-spacing:-0.260px;">Blots&amp;Noise</div><div class="btn" style="left:116px;top:767.8px;width:14.6px;height:14px;"></div><svg style="left:116px;top:767.8px;" width="14.6" height="14" viewBox="0 0 14.6 14"><path d="M4.4 5.6h5.800l-2.900 3.300z" fill="#fff"/></svg><div class="sl" style="left:137px;top:766.2px;width:64px;height:16.6px;"></div><div class="slf" style="left:139px;top:768.2px;width:31px;height:12.6px;"></div><div class="t " style="left:141.5px;top:768px;font-size:9.5px;letter-spacing:-0.680px;font-weight:bold;color:#222">Mess.</div><div class="t " style="left:196.4px;top:767.8px;transform:translateX(-100%);font-size:12px;letter-spacing:0.077px;margin-right:-0.077px;">52</div><div class="sep" style="left:4px;top:787px;width:200px;height:1px;"></div><svg style="left:5px;top:795.5px;" width="6" height="10" viewBox="0 0 6 10"><path d="M.5 .5v9l5-4.500z" fill="#6b3a1e"/></svg><div class="dd" style="left:15px;top:791px;width:117.5px;height:18.7px;"></div><div class="t " style="left:20px;top:793.5px;font-size:12px;letter-spacing:-0.204px;">Paper</div><div class="btn" style="left:116px;top:793.8px;width:14.6px;height:14px;"></div><svg style="left:116px;top:793.8px;" width="14.6" height="14" viewBox="0 0 14.6 14"><path d="M4.4 5.6h5.800l-2.900 3.300z" fill="#fff"/></svg><div class="sl" style="left:137px;top:792.2px;width:64px;height:16.6px;"></div><div class="slf" style="left:139px;top:794.2px;width:40px;height:12.6px;"></div><div class="t " style="left:141.5px;top:794px;font-size:9.5px;letter-spacing:-0.087px;font-weight:bold;color:#222">Intens.</div><div class="t " style="left:196.4px;top:793.8px;transform:translateX(-100%);font-size:12px;letter-spacing:0.077px;margin-right:-0.077px;">67</div><div class="sep" style="left:4px;top:813px;width:200px;height:1px;"></div><div class="t " style="left:6.3px;top:820.5px;font-size:12px;letter-spacing:-0.113px;">Blending</div><div class="cb" style="left:78.1px;top:820.5px;width:14.7px;height:14.4px;"></div><div class="sl" style="left:97.2px;top:820.5px;width:103.4px;height:14.4px;"></div><div class="t " style="left:196.4px;top:820.5px;transform:translateX(-100%);font-size:12px;letter-spacing:-0.173px;margin-right:0.173px;">0</div><div class="t " style="left:6.3px;top:838.5px;font-size:12px;letter-spacing:-0.065px;">Dilution</div><div class="cb" style="left:78.1px;top:838.3px;width:14.7px;height:14.4px;"></div><div class="sl" style="left:97.2px;top:838.3px;width:103.4px;height:14.4px;"></div><div class="t " style="left:196.4px;top:838.5px;transform:translateX(-100%);font-size:12px;letter-spacing:-0.173px;margin-right:0.173px;">0</div><div class="t " style="left:6.3px;top:856.5px;font-size:12px;letter-spacing:-0.108px;">Persistence</div><div class="sl" style="left:97.2px;top:856.5px;width:103.4px;height:14.3px;"></div><div class="t " style="left:196.4px;top:856.5px;transform:translateX(-100%);font-size:12px;letter-spacing:-0.173px;margin-right:0.173px;">0</div><div class="cb" style="left:97.2px;top:874.5px;width:14.2px;height:13.6px;"></div><svg style="left:97.2px;top:874.5px;" width="14.2" height="13.6" viewBox="0 0 14.2 13.6"><path d="M3.200 7l2.600 3 5-6.800" fill="none" stroke="#111" stroke-width="1.700"/></svg><div class="t " style="left:115px;top:874.5px;font-size:12px;letter-spacing:0.039px;">Keep Opacity</div><div class="t " style="left:6.3px;top:892.5px;font-size:12px;letter-spacing:-0.284px;">Blur Pressure</div><div class="sl" style="left:97.2px;top:892.5px;width:103.4px;height:14px;"></div><div class="slf" style="left:99.2px;top:894.5px;width:30.5px;height:10px;"></div><div class="t " style="left:196.4px;top:892.5px;transform:translateX(-100%);font-size:12px;letter-spacing:0.521px;margin-right:-0.521px;">... 31%</div><div class="" style="left:3.4px;top:913.8px;width:201px;height:110px;background:#f8f8f8;border:1px solid #b9b9b9;border-radius:2px"></div><div class="" style="left:4.4px;top:914.8px;width:199px;height:108px;background:#efefef"></div><div class="" style="left:5.7px;top:916px;width:35px;height:34px;background:#fff"></div><svg style="left:17.2px;top:922.5px;" width="12" height="12" viewBox="0 0 12 12"><circle cx="6" cy="6" r="0.5" fill="#000"/></svg><div class="t " style="left:16.2975px;top:937px;font-size:9.5px;letter-spacing:0.088px;line-height:13px;-webkit-text-stroke:.2px #000">0.7</div><div class="" style="left:41.7px;top:916px;width:35px;height:34px;background:#fff"></div><svg style="left:53.2px;top:922.5px;" width="12" height="12" viewBox="0 0 12 12"><circle cx="6" cy="6" r="0.5" fill="#000"/></svg><div class="t " style="left:52.29750000000001px;top:937px;font-size:9.5px;letter-spacing:0.088px;line-height:13px;-webkit-text-stroke:.2px #000">0.8</div><div class="" style="left:77.7px;top:916px;width:35px;height:34px;background:#fff"></div><svg style="left:89.2px;top:922.5px;" width="12" height="12" viewBox="0 0 12 12"><circle cx="6" cy="6" r="0.6" fill="#000"/></svg><div class="t " style="left:92.25855468750001px;top:937px;font-size:9.5px;letter-spacing:0.106px;line-height:13px;-webkit-text-stroke:.2px #000">1</div><div class="" style="left:113.7px;top:916px;width:35px;height:34px;background:#fff"></div><svg style="left:125.19999999999999px;top:922.5px;" width="12" height="12" viewBox="0 0 12 12"><circle cx="6" cy="6" r="0.7" fill="#000"/></svg><div class="t " style="left:124.29749999999999px;top:937px;font-size:9.5px;letter-spacing:0.088px;line-height:13px;-webkit-text-stroke:.2px #000">1.5</div><div class="" style="left:149.7px;top:916px;width:35px;height:34px;background:#fff"></div><svg style="left:161.2px;top:922.5px;" width="12" height="12" viewBox="0 0 12 12"><circle cx="6" cy="6" r="1" fill="#000"/></svg><div class="t " style="left:164.25855468749998px;top:937px;font-size:9.5px;letter-spacing:0.106px;line-height:13px;-webkit-text-stroke:.2px #000">2</div><div class="" style="left:5.7px;top:951px;width:35px;height:34px;background:#fff"></div><div class="sel" style="left:5.7px;top:951px;width:35px;height:34px;border-radius:1px"></div><svg style="left:17.2px;top:957.5px;" width="12" height="12" viewBox="0 0 12 12"><circle cx="6" cy="6" r="1.2" fill="#000"/></svg><div class="t " style="left:16.2975px;top:972px;font-size:9.5px;letter-spacing:0.088px;line-height:13px;-webkit-text-stroke:.2px #000">2.3</div><div class="" style="left:41.7px;top:951px;width:35px;height:34px;background:#fff"></div><svg style="left:53.2px;top:957.5px;" width="12" height="12" viewBox="0 0 12 12"><circle cx="6" cy="6" r="1.3" fill="#000"/></svg><div class="t " style="left:52.29750000000001px;top:972px;font-size:9.5px;letter-spacing:0.088px;line-height:13px;-webkit-text-stroke:.2px #000">2.6</div><div class="" style="left:77.7px;top:951px;width:35px;height:34px;background:#fff"></div><svg style="left:89.2px;top:957.5px;" width="12" height="12" viewBox="0 0 12 12"><circle cx="6" cy="6" r="1.5" fill="#000"/></svg><div class="t " style="left:92.25855468750001px;top:972px;font-size:9.5px;letter-spacing:0.106px;line-height:13px;-webkit-text-stroke:.2px #000">3</div><div class="" style="left:113.7px;top:951px;width:35px;height:34px;background:#fff"></div><svg style="left:125.19999999999999px;top:957.5px;" width="12" height="12" viewBox="0 0 12 12"><circle cx="6" cy="6" r="1.8" fill="#000"/></svg><div class="t " style="left:124.29749999999999px;top:972px;font-size:9.5px;letter-spacing:0.088px;line-height:13px;-webkit-text-stroke:.2px #000">3.5</div><div class="" style="left:149.7px;top:951px;width:35px;height:34px;background:#fff"></div><svg style="left:161.2px;top:957.5px;" width="12" height="12" viewBox="0 0 12 12"><circle cx="6" cy="6" r="2.1" fill="#000"/></svg><div class="t " style="left:164.25855468749998px;top:972px;font-size:9.5px;letter-spacing:0.106px;line-height:13px;-webkit-text-stroke:.2px #000">4</div><div class="" style="left:5.7px;top:986px;width:35px;height:34px;background:#fff"></div><svg style="left:17.2px;top:993.5px;" width="12" height="12" viewBox="0 0 12 12"><circle cx="6" cy="6" r="2.6" fill="#000"/></svg><div class="t " style="left:20.2585546875px;top:1007px;font-size:9.5px;letter-spacing:0.106px;line-height:13px;-webkit-text-stroke:.2px #000">5</div><div class="" style="left:41.7px;top:986px;width:35px;height:34px;background:#fff"></div><svg style="left:53.2px;top:993.5px;" width="12" height="12" viewBox="0 0 12 12"><circle cx="6" cy="6" r="3.1" fill="#000"/></svg><div class="t " style="left:56.25855468750001px;top:1007px;font-size:9.5px;letter-spacing:0.106px;line-height:13px;-webkit-text-stroke:.2px #000">6</div><div class="" style="left:77.7px;top:986px;width:35px;height:34px;background:#fff"></div><svg style="left:89.2px;top:993.5px;" width="12" height="12" viewBox="0 0 12 12"><circle cx="6" cy="6" r="3.7" fill="#000"/></svg><div class="t " style="left:92.25855468750001px;top:1007px;font-size:9.5px;letter-spacing:0.106px;line-height:13px;-webkit-text-stroke:.2px #000">7</div><div class="" style="left:113.7px;top:986px;width:35px;height:34px;background:#fff"></div><svg style="left:125.19999999999999px;top:993.5px;" width="12" height="12" viewBox="0 0 12 12"><circle cx="6" cy="6" r="4.2" fill="#000"/></svg><div class="t " style="left:128.25855468749998px;top:1007px;font-size:9.5px;letter-spacing:0.106px;line-height:13px;-webkit-text-stroke:.2px #000">8</div><div class="" style="left:149.7px;top:986px;width:35px;height:34px;background:#fff"></div><svg style="left:161.2px;top:993.5px;" width="12" height="12" viewBox="0 0 12 12"><circle cx="6" cy="6" r="4.8" fill="#000"/></svg><div class="t " style="left:164.25855468749998px;top:1007px;font-size:9.5px;letter-spacing:0.106px;line-height:13px;-webkit-text-stroke:.2px #000">9</div><div class="" style="left:186.2px;top:914.8px;width:17.2px;height:108px;background:#e6e6e6"></div><div class="btn" style="left:187.2px;top:915.5px;width:14.8px;height:14px;"></div><svg style="left:187.2px;top:915.5px;" width="14.8" height="14" viewBox="0 0 14.8 14"><path d="M4.550 8.600l2.850-3.300 2.850 3.300z" fill="#fff"/></svg><div class="btn" style="left:187.2px;top:931px;width:14.8px;height:22.5px;"></div><div class="btn" style="left:187.2px;top:1006.5px;width:14.8px;height:14px;"></div><svg style="left:187.2px;top:1006.5px;" width="14.8" height="14" viewBox="0 0 14.8 14"><path d="M4.550 5.400l2.850 3.300 2.850-3.300z" fill="#fff"/></svg>
</div></div>
<div class="" style="left:208px;top:48px;width:13.2px;height:967px;background:#e8e8e8"></div>
<div class="btn" style="left:207px;top:51px;width:15px;height:15px;"></div>
<svg style="left:207px;top:51px;" width="15" height="15" viewBox="0 0 15 15"><path d="M4.650 9.100l2.850-3.300 2.850 3.300z" fill="#fff"/></svg>
<div class="btn" style="left:207px;top:72px;width:15px;height:897px;"></div>
<div class="btn" style="left:207px;top:999px;width:15px;height:15px;"></div>
<svg style="left:207px;top:999px;" width="15" height="15" viewBox="0 0 15 15"><path d="M4.650 6l2.850 3.300 2.850-3.300z" fill="#fff"/></svg>
<!-- sec_canvas -->
<div class="btn" style="left:225.2px;top:51px;width:20.7px;height:18.5px;"></div><svg style="left:225.2px;top:51px;" width="20.7" height="18.5" viewBox="0 0 20.7 18.5"><path d="M8.100 8.600a3.300 3.300 0 1 1 3.300 3.300" fill="none" stroke="#fff" stroke-width="2.900"/><path d="M3.700 4.400v6.200h6.300z" fill="#fff"/><path d="M5 14.400h11" stroke="#fff" stroke-width="1.100"/></svg>
<div class="btn" style="left:248.2px;top:51px;width:20.7px;height:18.5px;"></div><svg style="left:248.2px;top:51px;" width="20.7" height="18.5" viewBox="0 0 20.7 18.5"><path d="M12.300 8.600a3.300 3.300 0 1 0-3.300 3.300" fill="none" stroke="#fff" stroke-width="2.900"/><path d="M16.700 4.400v6.200h-6.300z" fill="#fff"/><path d="M4.400 14.400h11" stroke="#fff" stroke-width="1.100"/></svg>
<div class="" style="left:277.3px;top:51px;width:20.4px;height:18.5px;background:#dedede;border:1px solid #d6d6d6;border-radius:2px"></div>
<div class="" style="left:300.3px;top:51px;width:20.4px;height:18.5px;background:#dedede;border:1px solid #d6d6d6;border-radius:2px"></div>
<svg style="left:277.3px;top:51px;" width="20.4" height="18.5" viewBox="0 0 20.4 18.5"><rect x="5" y="4" width="10.500" height="10.500" fill="none" stroke="#ececec" stroke-width="1" stroke-dasharray="2 1.500"/><path d="M7 12l6-6" stroke="#ececec" stroke-width="2"/></svg>
<svg style="left:300.3px;top:51px;" width="20.4" height="18.5" viewBox="0 0 20.4 18.5"><rect x="5" y="6" width="10.500" height="8" fill="none" stroke="#ececec" stroke-width="1" stroke-dasharray="2 1.500"/><path d="M5 5h10.500" stroke="#ececec" stroke-width="1"/></svg>
<div class="" style="left:325px;top:52.2px;width:18.6px;height:16.4px;background:#fbfbfb;border:1px solid #c4c4c4;border-radius:2px"></div>
<svg style="left:325px;top:52.2px;" width="18.6" height="16.4" viewBox="0 0 18.6 16.4"><path d="M2.500 8.500C5 5.500 8 4.600 10.500 5.200c2.200.5 4 1.800 5.600 3.500-2 1.600-4 2.400-6.600 2.300-2.600-.1-4.800-1.200-7-2.500z" fill="#fff" stroke="#222" stroke-width=".9"/><circle cx="9.400" cy="8" r="2.400" fill="#111"/><path d="M2.300 7.300C5 4.300 8 3.300 10.800 3.800c2.300.4 4 1.500 5.400 3" fill="none" stroke="#222" stroke-width="1"/><path d="M5 11.800l-.6 1M7.500 12.400l-.3 1.100M10 12.500v1.100M12.500 12l.4 1" stroke="#555" stroke-width=".5"/></svg>
<div class="t " style="left:347.5px;top:53.5px;font-size:12px;letter-spacing:-0.063px;">Selection</div>
<div class="dd" style="left:405.1px;top:51.4px;width:65.2px;height:18.3px;"></div>
<div class="t " style="left:410.4px;top:53.5px;font-size:12px;letter-spacing:0.395px;">59.4%</div>
<div class="btn" style="left:454.4px;top:53.4px;width:14.1px;height:14.2px;"></div>
<svg style="left:454.4px;top:53.4px;" width="14.1" height="14.2" viewBox="0 0 14.1 14.2"><path d="M4.150 5.800h5.800l-2.900 3.300z" fill="#fff"/></svg>
<div class="btn" style="left:473.1px;top:51px;width:18.6px;height:18.5px;"></div><svg style="left:473.1px;top:51px;" width="18.6" height="18.5" viewBox="0 0 18.6 18.5"><rect x="3.800" y="7.800" width="11" height="3" fill="#fff"/></svg>
<div class="btn" style="left:494.3px;top:51px;width:18.6px;height:18.5px;"></div><svg style="left:494.3px;top:51px;" width="18.6" height="18.5" viewBox="0 0 18.6 18.5"><rect x="3.800" y="7.800" width="11" height="3" fill="#fff"/><rect x="7.800" y="3.800" width="3" height="11" fill="#fff"/></svg>
<div class="btn" style="left:515.4px;top:51px;width:18.6px;height:18.5px;"></div><svg style="left:515.4px;top:51px;" width="18.6" height="18.5" viewBox="0 0 18.6 18.5"><rect x="5.700" y="5.700" width="7.200" height="7.200" fill="#fff"/></svg>
<div class="dd" style="left:542px;top:51.4px;width:67.2px;height:18.3px;"></div>
<div class="t " style="left:547.3px;top:53.5px;font-size:12px;letter-spacing:0.555px;">0.0°</div>
<div class="btn" style="left:593.3px;top:53.4px;width:14.4px;height:14.2px;"></div>
<svg style="left:593.3px;top:53.4px;" width="14.4" height="14.2" viewBox="0 0 14.4 14.2"><path d="M4.300 5.800h5.800l-2.900 3.300z" fill="#fff"/></svg>
<div class="btn" style="left:612.2px;top:51px;width:18.5px;height:18.5px;"></div><svg style="left:612.2px;top:51px;" width="18.5" height="18.5" viewBox="0 0 18.5 18.5"><path d="M5.100 9.40A4.300 4.300 0 1 1 7.250 13.42" fill="none" stroke="#fff" stroke-width="1.900"/><path d="M1.900 10.00L7.400 7.40L6.300 12.50z" fill="#fff"/></svg>
<div class="btn" style="left:633.4px;top:51px;width:18.3px;height:18.5px;"></div><svg style="left:633.4px;top:51px;" width="18.3" height="18.5" viewBox="0 0 18.3 18.5"><path d="M13.300 9.40A4.300 4.300 0 1 0 11.150 13.42" fill="none" stroke="#fff" stroke-width="1.900"/><path d="M16.500 10.00L11 7.40L12.100 12.50z" fill="#fff"/></svg>
<div class="btn" style="left:654.2px;top:51px;width:18.6px;height:18.5px;"></div><svg style="left:654.2px;top:51px;" width="18.6" height="18.5" viewBox="0 0 18.6 18.5"><rect x="5.700" y="5.700" width="7.200" height="7.200" fill="#fff"/></svg>
<div class="tb" style="left:681.6px;top:51.8px;width:21.9px;height:17.2px;background:#f6f6f6"></div>
<svg style="left:681.6px;top:51.8px;" width="21.9" height="17.2" viewBox="0 0 21.9 17.2"><path d="M6.400 5.600h11M4.400 11.800h10.600" stroke="#000" stroke-width="2.500"/><path d="M3.200 5.600l4-3.500v7zM18.500 11.800l-4-3.500v7z" fill="#000"/></svg>
<div class="t " style="left:712.4px;top:53.5px;font-size:12px;letter-spacing:-0.295px;">Stabilizer</div>
<div class="dd" style="left:763.3px;top:51.4px;width:43.3px;height:18.3px;"></div>
<div class="t " style="left:767.7px;top:53.5px;">5</div>
<div class="btn" style="left:790.1px;top:53.4px;width:14.7px;height:14.2px;"></div>
<svg style="left:790.1px;top:53.4px;" width="14.7" height="14.2" viewBox="0 0 14.7 14.2"><path d="M4.450 5.800h5.800l-2.900 3.300z" fill="#fff"/></svg>
<div class="tb" style="left:815.4px;top:51.8px;width:20px;height:17.2px;background:#f6f6f6"></div>
<svg style="left:815.4px;top:51.8px;" width="20" height="17.2" viewBox="0 0 20 17.2"><path d="M3 2.200l13.800 12.900" stroke="#111" stroke-width="1.200"/></svg>
<div class="" style="left:224.7px;top:72.9px;width:1389.3px;height:915.3px;background:#fff;border:1px solid #c89c74;border-right-color:#e6a678;border-bottom-color:#e6a678;border-radius:2.500px;box-shadow:0 0 0 1px #fbe6d2,0 0 0 2px #fdf4ec"></div>
<svg style="left:226px;top:74px" width="1371" height="896" viewBox="226 74 1371 896"><g fill="none" stroke-linecap="round" stroke-linejoin="round"><path d="M504.0 75.0C500.2 81.2 488.7 97.8 481.0 112.0C473.3 126.2 463.7 145.8 458.0 160.0C452.3 174.2 449.4 184.7 447.0 197.0C444.6 209.3 443.5 221.5 443.3 234.0C443.1 246.5 444.6 262.8 446.0 272.0C447.4 281.2 449.4 281.3 452.0 289.0C454.6 296.7 457.4 306.8 461.6 318.0C465.8 329.2 472.8 343.2 477.0 356.0C481.2 368.8 484.0 382.0 486.6 395.0C489.2 408.0 490.5 421.8 492.4 434.0C494.3 446.2 496.1 457.3 498.0 468.0C499.9 478.7 502.3 489.2 504.0 498.0C505.7 506.8 506.1 513.2 508.0 521.0C509.9 528.8 514.2 541.0 515.5 545.0" stroke="#4a4a4a" stroke-width="0.8" opacity="0.32"/><path d="M558.0 75.0C552.5 80.3 534.0 96.6 525.0 107.0C516.0 117.4 508.0 130.2 504.0 137.5C500.0 144.8 500.4 147.6 501.0 151.0C501.6 154.4 504.1 158.5 507.8 157.8C511.5 157.1 516.6 152.6 523.0 147.0C529.4 141.4 537.7 132.7 546.0 124.0C554.3 115.3 564.3 103.2 573.0 95.0C581.7 86.8 593.8 78.3 598.0 75.0" stroke="#4a4a4a" stroke-width="0.8" opacity="0.4"/><path d="M556.0 114.0C554.3 115.7 549.8 119.2 546.0 124.0C542.2 128.8 537.1 134.7 533.0 143.0C528.9 151.3 523.4 165.0 521.5 174.0C519.6 183.0 520.2 189.4 521.5 197.0C522.8 204.6 527.8 215.8 529.0 219.5" stroke="#4a4a4a" stroke-width="0.7" opacity="0.33"/><path d="M492.4 255.0C490.3 258.0 483.7 266.2 480.0 273.0C476.3 279.8 471.7 292.2 470.0 296.0" stroke="#4a4a4a" stroke-width="0.6" opacity="0.15"/><path d="M895.7 75.0C899.4 81.2 912.0 98.8 918.0 112.5C924.0 126.2 928.2 142.6 931.4 157.0C934.6 171.4 935.7 185.2 937.0 199.0C938.3 212.8 938.6 224.8 939.0 240.0C939.4 255.2 939.3 275.3 939.5 290.0C939.7 304.7 939.1 316.9 940.0 328.0C940.9 339.1 942.4 348.9 944.8 356.6C947.2 364.3 951.8 374.0 954.5 374.0C957.2 374.0 959.5 365.9 961.2 356.6C963.0 347.3 964.4 332.1 965.0 318.0C965.6 303.9 965.5 287.0 965.0 272.0C964.5 257.0 963.4 242.4 962.0 228.0C960.6 213.6 958.9 199.5 956.4 185.7C953.9 171.9 950.6 157.8 946.8 145.0C942.9 132.2 938.9 120.4 933.3 108.7C927.7 97.0 916.4 80.6 913.0 75.0" stroke="#4a4a4a" stroke-width="0.8" opacity="0.33"/><path d="M959.3 114.4C958.3 122.1 954.3 144.9 953.5 160.6C952.7 176.3 955.0 190.6 954.5 208.8C954.0 227.0 952.2 253.4 950.6 270.0C949.0 286.6 947.7 292.4 944.8 308.5C941.9 324.6 937.8 347.1 933.3 366.3C928.8 385.6 923.8 406.7 918.0 424.0C912.2 441.3 901.8 462.3 898.6 470.0" stroke="#4a4a4a" stroke-width="0.6" opacity="0.17"/><path d="M956.4 170.3C957.7 176.7 961.4 192.2 964.0 208.8C966.6 225.4 970.3 253.4 971.8 270.0C973.2 286.6 973.3 295.7 972.7 308.5C972.1 321.3 969.8 332.6 968.0 347.0C966.2 361.4 963.8 379.0 962.2 395.0C960.6 411.0 959.9 430.5 958.3 443.0C956.7 455.5 954.2 462.3 952.5 470.0C950.8 477.7 950.6 480.4 947.9 489.0C945.2 497.6 938.3 516.2 936.4 521.6" stroke="#4a4a4a" stroke-width="0.7" opacity="0.26"/><path d="M1015.0 75.0C1018.1 86.1 1028.9 119.4 1033.4 141.4C1037.9 163.4 1040.6 196.1 1042.0 207.0" stroke="#4a4a4a" stroke-width="0.6" opacity="0.08"/><path d="M1034.4 93.0C1034.4 107.5 1034.5 147.2 1034.5 180.0C1034.5 212.8 1034.4 271.7 1034.4 290.0" stroke="#4a4a4a" stroke-width="0.6" opacity="0.07"/><path d="M462.0 481.0C459.8 477.5 453.2 469.5 449.0 460.0C444.8 450.5 440.3 436.4 436.6 424.0C432.9 411.6 429.4 398.3 427.0 385.5C424.6 372.7 423.0 358.2 422.0 347.0C421.0 335.8 420.6 325.5 420.8 318.0C421.0 310.5 422.0 305.7 423.0 302.0C424.0 298.3 424.4 295.2 427.0 296.0C429.6 296.8 434.3 300.0 438.5 306.6C442.7 313.2 447.2 324.9 452.0 335.5C456.8 346.1 461.9 358.4 467.4 370.0C472.8 381.6 479.3 394.2 484.7 404.8C490.1 415.4 494.2 424.1 500.0 433.7C505.8 443.3 512.0 453.3 519.4 462.5C526.8 471.7 533.8 480.1 544.4 489.0C555.0 497.9 568.6 508.9 583.0 515.8C597.4 522.7 615.0 527.6 631.0 530.3C647.0 533.0 663.0 532.9 679.0 532.2C695.0 531.6 713.5 528.5 727.0 526.4C740.5 524.3 749.2 522.3 760.0 519.7C770.8 517.1 777.7 515.2 792.0 511.0C806.3 506.8 829.0 500.0 846.0 494.7C863.0 489.4 877.7 485.1 894.0 479.3C910.3 473.5 930.5 467.2 944.0 460.0C957.5 452.8 965.5 442.7 975.0 436.0C984.5 429.3 993.8 427.2 1001.0 420.0C1008.2 412.8 1015.2 397.5 1018.0 393.0" stroke="#4a4a4a" stroke-width="0.8" opacity="0.38"/><path d="M449.0 460.0C451.1 463.2 456.3 473.5 461.6 479.3C466.9 485.1 473.9 490.9 481.0 494.7C488.1 498.5 499.5 500.8 504.0 502.0C508.5 503.2 507.3 502.0 508.0 502.0" stroke="#333" stroke-width="1" opacity="0.75"/><path d="M430.0 400.0C431.3 405.3 434.8 422.0 438.0 432.0C441.2 442.0 447.2 455.3 449.0 460.0" stroke="#444" stroke-width="0.9" opacity="0.5"/><path d="M482.8 270.0C481.2 273.2 475.7 281.7 473.0 289.0C470.3 296.3 467.0 305.9 466.4 314.0C465.8 322.1 467.5 330.3 469.3 337.4C471.1 344.5 472.5 348.6 477.0 356.6C481.5 364.6 488.3 374.9 496.3 385.5C504.3 396.1 515.4 409.8 525.0 420.0C534.6 430.2 544.0 439.9 554.0 447.0C564.0 454.1 574.0 458.7 585.0 462.5C596.0 466.3 614.2 468.8 620.0 470.0" stroke="#4a4a4a" stroke-width="0.7" opacity="0.22"/><path d="M455.8 277.7C456.8 281.4 459.0 291.3 462.0 300.0C465.0 308.7 469.7 319.2 474.0 330.0C478.3 340.8 484.2 353.3 488.0 365.0C491.8 376.7 495.5 394.2 497.0 400.0" stroke="#4a4a4a" stroke-width="0.6" opacity="0.14"/><path d="M485.7 308.5C488.4 313.9 495.8 329.4 502.0 341.0C508.2 352.6 515.6 367.2 523.0 377.8C530.4 388.4 537.9 396.8 546.3 404.8C554.7 412.8 562.4 419.9 573.3 426.0C584.2 432.1 597.3 436.3 611.8 441.4C626.2 446.5 645.3 452.1 660.0 456.8C674.7 461.5 686.7 463.9 700.0 469.3C713.3 474.7 724.7 482.1 740.0 489.0C755.3 495.9 776.0 505.2 792.0 511.0C808.0 516.8 822.5 521.7 836.3 523.5C850.1 525.3 863.6 523.5 874.8 521.6C886.0 519.7 894.7 516.8 903.7 512.0C912.7 507.2 921.3 500.4 928.7 492.7C936.1 485.0 942.4 476.2 947.9 465.8C953.4 455.4 959.6 436.0 962.0 430.0" stroke="#4a4a4a" stroke-width="0.8" opacity="0.4"/><path d="M502.0 400.0C505.5 410.0 514.3 442.7 523.0 460.0C531.7 477.3 542.4 490.5 554.0 504.0C565.6 517.5 578.0 530.4 592.5 541.0C607.0 551.6 624.7 561.6 640.7 567.8C656.8 574.0 672.8 576.8 688.8 578.4C704.8 580.0 720.5 579.5 737.0 577.4C753.5 575.3 773.1 571.1 788.0 566.0C802.9 560.9 813.8 554.6 826.6 546.6C839.4 538.6 853.8 528.1 865.0 517.8C876.2 507.5 885.3 494.6 894.0 485.0C902.7 475.4 909.3 470.0 917.0 460.0C924.7 450.0 932.8 435.8 940.0 425.0C947.2 414.2 956.7 400.0 960.0 395.0" stroke="#4a4a4a" stroke-width="0.8" opacity="0.36"/><path d="M658.0 498.5C664.7 502.4 681.4 513.7 698.4 521.6C715.4 529.5 743.4 540.9 760.0 545.7C776.6 550.5 785.1 551.3 797.8 550.5C810.5 549.7 823.5 547.1 836.3 541.0C849.1 534.9 863.6 523.3 874.8 514.0C886.0 504.7 895.0 494.0 903.7 485.0C912.4 476.0 917.4 470.2 926.8 460.0C936.2 449.8 949.3 436.4 960.0 424.0C970.7 411.6 982.3 397.1 991.0 385.5C999.7 373.9 1008.5 359.8 1012.0 354.7" stroke="#4a4a4a" stroke-width="0.7" opacity="0.25"/><path d="M960.2 424.0C959.6 424.0 957.7 425.9 956.4 424.0C955.1 422.1 952.5 418.3 952.5 412.5C952.5 406.7 953.2 398.1 956.4 389.4C959.6 380.7 965.4 369.5 971.8 360.5C978.2 351.5 988.0 341.2 995.0 335.5C1002.0 329.8 1008.9 325.9 1014.0 326.2C1019.1 326.5 1023.5 331.4 1025.7 337.4C1027.9 343.4 1027.9 352.8 1027.2 362.4C1026.5 372.0 1024.6 384.1 1021.8 395.0C1019.0 405.9 1014.8 417.4 1010.3 428.0C1005.8 438.6 998.9 451.7 995.0 458.7C991.1 465.7 988.3 468.1 987.0 470.0" stroke="#3a3a3a" stroke-width="0.9" opacity="0.55"/><path d="M1021.8 395.0C1019.9 400.5 1014.8 417.4 1010.3 428.0C1005.8 438.6 999.9 450.1 995.0 458.7C990.1 467.2 986.3 472.4 980.7 479.3C975.1 486.2 967.8 494.6 961.4 500.4C955.0 506.2 948.0 510.5 942.2 514.0C936.4 517.5 929.4 520.3 926.8 521.6" stroke="#2a2a2a" stroke-width="1.1" opacity="0.8"/><path d="M936.4 521.6C935.0 521.8 930.9 518.8 927.7 522.6C924.5 526.5 919.7 539.7 917.0 544.7C914.3 549.7 910.7 554.7 911.4 552.4C912.1 550.1 918.4 536.1 921.0 531.0C923.6 525.9 925.8 523.2 926.8 521.6" stroke="#333" stroke-width="0.8" opacity="0.7"/><path d="M502.0 460.0C503.6 466.4 508.2 485.7 511.7 498.5C515.2 511.3 518.5 525.5 523.0 537.0C527.5 548.5 536.0 562.7 538.6 567.8" stroke="#4a4a4a" stroke-width="0.7" opacity="0.35"/><path d="M500.0 513.5C502.3 513.9 510.1 513.5 513.6 515.8C517.1 518.1 519.4 523.2 521.3 527.4C523.2 531.6 524.4 538.7 525.0 541.0" stroke="#444" stroke-width="0.8" opacity="0.5"/><path d="M954.7 460.0C953.6 464.8 951.0 478.7 948.0 489.0C945.0 499.3 940.6 511.4 936.4 521.6C932.2 531.9 928.5 540.9 923.0 550.5C917.5 560.1 910.1 569.8 903.7 579.4C897.3 589.0 891.8 599.2 884.4 608.2C877.0 617.2 868.1 624.8 859.4 633.3C850.7 641.8 836.9 655.0 832.4 659.3" stroke="#4a4a4a" stroke-width="0.8" opacity="0.4"/><path d="M921.0 575.5C916.5 579.7 904.9 591.8 894.0 600.5C883.1 609.2 870.6 617.7 855.5 627.5C840.4 637.3 812.2 654.0 803.5 659.3" stroke="#4a4a4a" stroke-width="0.7" opacity="0.3"/><path d="M909.4 585.0C905.5 590.8 894.0 609.8 886.3 619.8C878.6 629.8 869.6 638.2 863.2 644.8C856.8 651.4 850.4 656.9 847.8 659.3" stroke="#4a4a4a" stroke-width="0.7" opacity="0.3"/><path d="M725.7 722.2C733.8 717.3 756.6 703.1 774.5 692.6C792.3 682.2 823.2 665.1 833.0 659.6" stroke="#2a2a2a" stroke-width="0.9762814753267137" opacity="0.43377815851834084"/><path d="M766.2 686.0C771.6 683.4 785.7 677.2 798.7 670.2C811.8 663.2 836.9 648.3 844.5 643.9" stroke="#2a2a2a" stroke-width="0.8782719894062057" opacity="0.5538476895113672"/><path d="M838.4 645.8C843.0 641.4 857.3 627.9 865.9 619.2C874.5 610.6 886.0 598.4 890.0 594.2" stroke="#2a2a2a" stroke-width="0.846832008646719" opacity="0.6159317495606259"/><path d="M682.7 706.0C687.8 707.7 698.4 720.2 713.2 716.3C728.1 712.4 762.0 688.4 771.7 682.8" stroke="#2a2a2a" stroke-width="0.8830504320483303" opacity="0.5980704810325893"/><path d="M597.2 637.7C604.0 642.3 624.0 652.9 638.3 665.5C652.7 678.0 675.6 705.0 683.0 712.9" stroke="#2a2a2a" stroke-width="0.8739310892676705" opacity="0.7811190724939161"/><path d="M541.4 589.4C550.5 598.3 580.2 629.3 596.2 642.6C612.2 656.0 630.5 665.1 637.3 669.6" stroke="#2a2a2a" stroke-width="0.732867254725164" opacity="0.6332547105053109"/><path d="M688.2 720.1C692.6 720.8 702.6 727.3 714.5 724.1C726.3 720.9 751.8 704.8 759.3 700.9" stroke="#2a2a2a" stroke-width="0.7269520313234845" opacity="0.7086596803297884"/><path d="M648.6 680.9C655.6 687.2 674.0 713.1 690.3 718.4C706.6 723.7 737.1 713.6 746.4 712.7" stroke="#2a2a2a" stroke-width="0.8726883046509964" opacity="0.5276840171913805"/><path d="M665.4 696.1C668.0 698.3 674.4 704.5 681.0 708.8C687.5 713.1 700.8 719.7 704.7 721.9" stroke="#2a2a2a" stroke-width="1.0844696057655536" opacity="0.6388260454657073"/><path d="M642.0 687.3C645.1 689.8 652.8 696.2 660.7 702.5C668.5 708.8 684.2 721.3 688.9 725.1" stroke="#2a2a2a" stroke-width="0.8333461431695258" opacity="0.38302934902479085"/><path d="M595.0 635.8C602.3 640.7 626.2 655.0 638.6 665.2C650.9 675.4 664.1 691.8 669.2 697.2" stroke="#2a2a2a" stroke-width="0.9585570604434763" opacity="0.739936550511"/><path d="M650.6 679.3C655.7 684.2 672.3 701.7 681.2 708.5C690.1 715.4 700.1 718.5 703.9 720.5" stroke="#2a2a2a" stroke-width="0.9830397741733654" opacity="0.5992690368627415"/><path d="M712.3 717.9C719.6 714.4 740.6 704.7 755.7 696.9C770.8 689.1 795.2 675.3 803.1 671.0" stroke="#2a2a2a" stroke-width="0.8156416292441403" opacity="0.7206730310408087"/><path d="M842.2 646.2C846.4 642.0 858.3 631.5 867.9 621.1C877.5 610.6 894.3 589.6 899.5 583.3" stroke="#2a2a2a" stroke-width="0.951714854270804" opacity="0.7335799439038466"/><path d="M841.0 647.9C843.6 645.5 850.3 639.7 856.6 633.5C862.9 627.3 875.0 614.4 878.7 610.5" stroke="#2a2a2a" stroke-width="0.7793141989177677" opacity="0.5159534166675181"/><path d="M659.1 699.4C661.8 702.2 667.4 711.1 675.0 716.3C682.6 721.5 699.7 728.3 704.7 730.6" stroke="#2a2a2a" stroke-width="0.9629981206810805" opacity="0.413156234215528"/><path d="M569.0 615.2C574.3 618.8 588.7 628.2 600.4 636.5C612.0 644.9 632.6 660.4 639.1 665.2" stroke="#2a2a2a" stroke-width="0.8399783741199003" opacity="0.41147261298977533"/><path d="M593.9 637.8C597.9 640.3 607.7 645.3 617.9 653.1C628.2 661.0 649.1 679.6 655.3 684.9" stroke="#2a2a2a" stroke-width="0.7582950026316195" opacity="0.7835207053404387"/><path d="M702.5 723.0C707.0 722.6 717.0 726.1 729.4 720.8C741.7 715.5 768.7 696.1 776.5 691.2" stroke="#2a2a2a" stroke-width="0.7065396400632876" opacity="0.6480193631503737"/><path d="M742.8 711.3C750.1 706.4 769.2 692.2 786.3 681.6C803.5 671.1 835.7 653.6 845.6 648.0" stroke="#2a2a2a" stroke-width="0.8873108284748582" opacity="0.498567444643351"/><path d="M823.6 654.7C830.7 648.8 854.3 632.2 866.3 619.6C878.3 607.0 890.9 585.8 895.8 579.0" stroke="#2a2a2a" stroke-width="0.8035997396769232" opacity="0.6642506059318648"/><path d="M727.4 720.5C735.0 715.5 755.8 700.7 773.2 690.8C790.6 680.9 822.1 665.9 831.9 660.9" stroke="#2a2a2a" stroke-width="0.9752911380764728" opacity="0.5832775792205573"/><path d="M710.0 720.2C717.7 716.4 740.7 705.9 756.2 697.6C771.7 689.3 795.2 674.8 803.0 670.3" stroke="#2a2a2a" stroke-width="0.790131348715134" opacity="0.4463851788862676"/><path d="M677.6 710.4C683.7 712.1 697.6 724.3 713.9 720.3C730.2 716.2 765.1 691.8 775.4 686.1" stroke="#2a2a2a" stroke-width="0.718257597983241" opacity="0.3788625570200388"/><path d="M686.8 720.1C691.4 720.8 704.5 726.0 714.6 724.6C724.7 723.1 741.9 713.6 747.3 711.4" stroke="#2a2a2a" stroke-width="1.0223244631856923" opacity="0.7288559212678405"/><path d="M842.9 651.5C847.8 647.1 862.3 636.5 872.4 625.2C882.4 613.8 898.3 590.3 903.5 583.3" stroke="#2a2a2a" stroke-width="0.8264816567805549" opacity="0.5093966218759391"/><path d="M824.6 658.1C827.7 656.2 835.5 653.6 843.1 646.9C850.8 640.3 866.2 623.1 870.8 618.3" stroke="#2a2a2a" stroke-width="1.142805677154147" opacity="0.4018871773102607"/><path d="M651.0 679.3C657.8 685.3 676.4 710.4 691.7 715.4C707.1 720.4 734.7 710.3 743.3 709.2" stroke="#2a2a2a" stroke-width="0.9138140359164699" opacity="0.43040874281078806"/><path d="M543.7 588.0C556.1 598.8 597.3 634.5 618.1 652.9C638.8 671.3 660.0 690.6 668.4 698.1" stroke="#2a2a2a" stroke-width="1.1485639478288074" opacity="0.4216365637412838"/><path d="M678.5 708.3C680.5 709.9 684.6 715.7 690.6 717.8C696.7 719.8 710.9 720.2 714.9 720.6" stroke="#2a2a2a" stroke-width="1.099296633597347" opacity="0.3530269579556677"/><path d="M738.4 712.2C746.1 706.6 767.4 689.8 784.8 678.7C802.2 667.6 833.1 651.2 842.8 645.7" stroke="#2a2a2a" stroke-width="1.0897712608296832" opacity="0.7092378377074551"/><path d="M619.0 648.9C624.9 654.2 643.2 670.5 654.4 680.6C665.6 690.8 680.9 705.2 686.2 710.1" stroke="#2a2a2a" stroke-width="1.1195213995440128" opacity="0.46784741922837025"/><path d="M543.7 588.1C552.8 596.6 580.2 623.4 598.6 639.1C617.0 654.9 644.7 675.4 653.9 682.7" stroke="#2a2a2a" stroke-width="1.0903970243694303" opacity="0.543020436986811"/><path d="M635.3 665.3C640.4 670.7 655.8 688.0 665.7 697.3C675.5 706.6 689.6 717.2 694.4 721.1" stroke="#2a2a2a" stroke-width="1.1052552541762952" opacity="0.583195596396844"/><path d="M521.3 527.4C521.9 529.6 523.3 536.1 525.1 540.9C526.9 545.7 529.4 550.8 532.0 556.0C534.6 561.2 539.5 569.3 541.0 572.0" stroke="#333" stroke-width="0.8" opacity="0.42"/><path d="M537.7 564.0C542.0 568.5 556.2 583.5 563.7 590.9C571.2 598.3 579.7 605.3 582.9 608.2" stroke="#2a2a2a" stroke-width="1" opacity="0.7"/><path d="M530.9 566.9C533.5 571.2 540.2 584.0 546.3 592.8C552.4 601.6 559.8 611.4 567.5 619.8C575.2 628.1 585.4 636.3 592.5 642.9C599.6 649.5 607.0 656.6 609.9 659.3" stroke="#2a2a2a" stroke-width="0.9" opacity="0.6"/><path d="M529.0 583.2C533.2 586.4 545.0 594.1 554.0 602.5C563.0 610.9 574.5 623.8 582.9 633.3C591.2 642.8 600.6 655.0 604.1 659.3" stroke="#333" stroke-width="0.8" opacity="0.42"/><path d="M596.4 638.1C599.0 639.5 607.0 643.3 611.8 646.8C616.6 650.3 623.0 657.2 625.3 659.3" stroke="#333" stroke-width="0.9" opacity="0.55"/><path d="M652.0 710.5C659.2 712.1 683.0 718.1 695.0 720.0C707.0 721.9 719.2 721.7 724.0 722.0" stroke="#333" stroke-width="0.8" opacity="0.5"/><path d="M664.0 723.0C669.2 723.8 686.7 727.1 695.0 727.8C703.3 728.5 705.7 728.9 714.0 727.0C722.3 725.1 739.8 718.1 745.0 716.3" stroke="#2a2a2a" stroke-width="1" opacity="0.7"/><path d="M675.5 712.4C676.9 714.0 681.1 718.6 684.0 722.0C686.9 725.4 691.3 730.8 692.8 732.6" stroke="#333" stroke-width="0.8" opacity="0.6"/><path d="M679.4 710.5C681.5 712.4 687.8 718.5 692.0 722.0C696.2 725.5 702.3 730.1 704.4 731.7" stroke="#333" stroke-width="0.8" opacity="0.55"/><path d="M668.0 700.0C671.7 702.7 681.3 712.8 690.0 716.0C698.7 719.2 710.0 720.7 720.0 719.0C730.0 717.3 740.8 711.3 750.0 706.0C759.2 700.7 770.8 690.2 775.0 687.0" stroke="#222" stroke-width="1.1" opacity="0.7"/><path d="M640.0 660.0C642.5 661.3 650.3 663.0 655.0 668.0C659.7 673.0 665.8 686.3 668.0 690.0" stroke="#333" stroke-width="0.8" opacity="0.5"/><path d="M596.4 638.0C599.0 639.5 607.3 645.4 611.8 646.8C616.3 648.2 621.4 646.5 623.3 646.4" stroke="#444" stroke-width="0.8" opacity="0.5"/><path d="M780.0 682.0C782.0 680.3 787.7 674.0 792.0 672.0C796.3 670.0 800.3 671.7 806.0 670.0C811.7 668.3 822.7 663.3 826.0 662.0" stroke="#333" stroke-width="0.9" opacity="0.55"/><path d="M696.7 752.8C698.3 753.3 700.8 755.8 706.3 755.7C711.8 755.6 725.5 752.6 729.4 752.0" stroke="#4a4a4a" stroke-width="0.7" opacity="0.18"/><path d="M739.0 739.4C740.5 738.9 746.2 737.0 747.7 736.5" stroke="#4a4a4a" stroke-width="0.7" opacity="0.18"/><path d="M571.9 239.6C571.9 242.2 572.0 250.6 572.0 255.0C572.0 259.4 572.0 264.2 572.0 266.0" stroke="#e0105a" stroke-width="0.7" opacity="0.18"/><path d="M572.0 262.0C572.0 263.7 572.0 270.3 572.0 272.0" stroke="#e0105a" stroke-width="0.9" opacity="0.5"/><path d="M572.0 270.0C572.0 288.3 572.1 353.3 572.3 380.0C572.5 406.7 572.7 415.0 573.0 430.0C573.3 445.0 573.7 455.4 574.2 470.0C574.7 484.6 574.9 498.6 576.2 517.8C577.5 537.0 579.5 563.1 581.9 585.0C584.3 606.9 588.2 633.5 590.8 649.0C593.4 664.5 595.9 671.4 597.5 677.8C599.1 684.2 599.8 686.8 600.4 687.4C601.0 688.0 601.7 684.8 601.4 681.6C601.1 678.4 599.0 670.3 598.5 668.0" stroke="#e0105a" stroke-width="1.1" opacity="0.85"/><path d="M870.5 203.0C870.7 202.8 871.1 201.2 871.7 202.0C872.3 202.8 873.2 205.3 874.0 208.0C874.8 210.7 876.1 216.7 876.5 218.4" stroke="#e0105a" stroke-width="0.7" opacity="0.3"/><path d="M876.5 218.4C876.9 223.2 878.5 238.4 879.0 247.3C879.5 256.2 880.0 258.6 879.8 272.0C879.6 285.4 878.8 307.3 877.8 327.8C876.8 348.3 875.4 373.0 873.6 395.0C871.8 417.0 869.2 439.5 867.0 460.0C864.8 480.5 863.2 497.0 860.3 517.8C857.4 538.6 853.1 565.8 849.7 585.0C846.3 604.2 843.4 619.5 840.0 633.3C836.6 647.1 832.0 660.4 829.5 668.0C827.0 675.6 825.5 676.9 824.7 678.7" stroke="#e0105a" stroke-width="1.1" opacity="0.85"/></g></svg>
<div class="" style="left:1598px;top:74px;width:13.3px;height:896.5px;background:#e8e8e8"></div>
<div class="btn" style="left:1597.3px;top:75.2px;width:14.5px;height:14.5px;"></div>
<svg style="left:1597.3px;top:75.2px;" width="14.5" height="14.5" viewBox="0 0 14.5 14.5"><path d="M4.400 9l2.850-3.300 2.850 3.300z" fill="#fff"/></svg>
<div class="btn" style="left:1597.5px;top:342px;width:14.1px;height:224.2px;"></div>
<div class="btn" style="left:1597.3px;top:955.2px;width:14.5px;height:14.5px;"></div>
<svg style="left:1597.3px;top:955.3px;" width="14.5" height="14.2" viewBox="0 0 14.5 14.2"><path d="M4.400 5.600l2.850 3.300 2.850-3.300z" fill="#fff"/></svg>
<div class="" style="left:226px;top:971.6px;width:1385.3px;height:13.6px;background:#e8e8e8"></div>
<div class="" style="left:1598px;top:970.3px;width:13.3px;height:14.9px;background:#e8e8e8"></div>
<div class="btn" style="left:227.2px;top:971.3px;width:14.5px;height:14.3px;"></div>
<svg style="left:227.2px;top:971.3px;" width="14.5" height="14.3" viewBox="0 0 14.5 14.3"><path d="M8.800 4.300l-3.300 2.850 3.300 2.850z" fill="#fff"/></svg>
<div class="btn" style="left:600px;top:971.3px;width:558.5px;height:14.3px;"></div>
<div class="btn" style="left:1581px;top:971.3px;width:14.5px;height:14.3px;"></div>
<svg style="left:1581px;top:971.3px;" width="14.5" height="14.3" viewBox="0 0 14.5 14.3"><path d="M5.700 4.300l3.300 2.850-3.300 2.850z" fill="#fff"/></svg>
<div class="" style="left:1599.2px;top:990.4px;width:14.4px;height:10.2px;background:#d6d6d6;border:1px solid #cbcbcb;border-radius:2.500px"></div>
<svg style="left:1599.2px;top:990.4px;" width="14.4" height="10.2" viewBox="0 0 14.4 10.2"><path d="M4.300 6.700l2.950-3.100 2.950 3.100z" fill="#fff"/></svg>
<div class="" style="left:1599.2px;top:1003.2px;width:14.4px;height:10.2px;background:#d6d6d6;border:1px solid #cbcbcb;border-radius:2.500px"></div>
<svg style="left:1599.2px;top:1003.2px;" width="14.4" height="10.2" viewBox="0 0 14.4 10.2"><path d="M4.300 3.600l2.950 3.100 2.950-3.100z" fill="#fff"/></svg>
<div class="sel" style="left:225.1px;top:990px;width:179.8px;height:23.5px;"></div>
<div class="" style="left:407.3px;top:990px;width:179.2px;height:23.5px;background:#e6e6e6;border:1px solid #c2c2c2;border-radius:2px"></div>
<svg style="left:229.7px;top:994px;" width="15" height="16.5" viewBox="0 0 15 16.5"><defs><filter id="fib"><feGaussianBlur stdDeviation=".9"/></filter><clipPath id="fic"><path d="M.5 .5h9.500l4 4v11h-13.500z"/></clipPath></defs><path d="M.5 .5h9.500l4 4v11h-13.500z" fill="#1a7a30"/><g clip-path="url(#fic)"><g filter="url(#fib)"><rect x="0" y="0" width="9" height="4.500" fill="#2a8cf0"/><ellipse cx="8" cy="8.500" rx="4.800" ry="5.200" fill="#f4ee90"/><ellipse cx="6" cy="5.500" rx="3" ry="2.500" fill="#70e060"/><path d="M0 9.500c4 .500 8 2.500 12 6l-3 1.500c-3-3-6-4.500-9-5z" fill="#8a6420"/><rect x="0" y="13.500" width="9" height="3" fill="#106a20"/><ellipse cx="12" cy="10.500" rx="1.500" ry="3" fill="#d08030"/></g></g><path d="M.5 .5h9.500l4 4v11h-13.500z" fill="none" stroke="#06301a" stroke-width="1"/><path d="M10 .5v4h4z" fill="#fff"/></svg>
<svg style="left:411.7px;top:994px;" width="15" height="16.5" viewBox="0 0 15 16.5"><defs><filter id="fib2"><feGaussianBlur stdDeviation=".9"/></filter><clipPath id="fic2"><path d="M.5 .5h9.500l4 4v11h-13.500z"/></clipPath></defs><path d="M.5 .5h9.500l4 4v11h-13.500z" fill="#1a7a30"/><g clip-path="url(#fic2)"><g filter="url(#fib2)"><rect x="0" y="0" width="9" height="4.500" fill="#2a8cf0"/><ellipse cx="8" cy="8.500" rx="4.800" ry="5.200" fill="#f4ee90"/><ellipse cx="6" cy="5.500" rx="3" ry="2.500" fill="#70e060"/><path d="M0 9.500c4 .500 8 2.500 12 6l-3 1.500c-3-3-6-4.500-9-5z" fill="#8a6420"/><rect x="0" y="13.500" width="9" height="3" fill="#106a20"/><ellipse cx="12" cy="10.500" rx="1.500" ry="3" fill="#d08030"/></g></g><path d="M.5 .5h9.500l4 4v11h-13.500z" fill="none" stroke="#06301a" stroke-width="1"/><path d="M10 .5v4h4z" fill="#fff"/></svg>
<div class="t " style="left:249.2px;top:994.5px;font-size:12px;letter-spacing:-0.020px;">D9TD2nMButL6SJ...</div>
<div class="t " style="left:381px;top:995px;font-size:10px;letter-spacing:-0.171px;-webkit-text-stroke:.2px #000">59%</div>
<div class="t " style="left:431px;top:994.5px;font-size:12px;letter-spacing:0.399px;">unknown (2).psd</div>
<div class="t " style="left:558.1px;top:995px;font-size:10px;letter-spacing:-0.319px;-webkit-text-stroke:.2px #000">100%</div>
<div class="" style="left:1617.3px;top:48px;width:1px;height:965.5px;background:#d4d4d4"></div>
<div class="" style="left:1616.2px;top:522.6px;width:3.2px;height:15.5px;background:#8a8a8a;border-radius:1.500px;border:.5px solid #f8f8f8"></div>
<!-- sec_right -->
<div class="" style="left:1621.3px;top:51.2px;width:295.2px;height:149.2px;background:#fff;border:1px solid #b4b4b4;border-radius:2px"></div><div class="" style="left:1623.1px;top:53.1px;width:292px;height:146px;background:#b0b0b0"></div><div class="" style="left:1714px;top:53.1px;width:110px;height:146px;background:#fff"></div><div class="" style="left:1725.4px;top:85.3px;width:78.6px;height:52.4px;border:1px solid #6a6a6a"></div><div class="" style="left:1764px;top:85.3px;width:1px;height:26px;background:#555"></div><svg style="left:1730px;top:88px;" width="60" height="46" viewBox="0 0 60 46"><path d="M10 8c-1 10 2 20 8 26 3 3 7 3 10 0 5-6 8-14 8-24" fill="none" stroke="#ddd" stroke-width=".7"/><path d="M14 10c0 8 1 15 2 22M30 8c0 8-1 15-3 22" stroke="#f6d0dc" stroke-width=".6" fill="none"/></svg><div class="t " style="left:1624.8px;top:203.3px;font-size:10.5px;letter-spacing:-0.393px;">Scale</div><div class="t " style="left:1849.7px;top:203.3px;transform:translateX(-100%);font-size:10.5px;letter-spacing:0.506px;margin-right:-0.506px;">59.4%</div><div class="" style="left:1624.8px;top:216px;width:225px;height:1.6px;background:#7a7a7a"></div><div class="" style="left:1737.2px;top:215.5px;width:1.2px;height:2.6px;background:#f8f8f8"></div><svg style="left:1719.5px;top:217.8px;" width="10" height="6.5" viewBox="0 0 10 6.5"><path d="M5 .8l4 5h-8z" fill="#fff" stroke="#000" stroke-width="1"/></svg><div class="btn" style="left:1856.1px;top:204.3px;width:18.6px;height:18.1px;"></div><svg style="left:1856.1px;top:204.3px;" width="18.6" height="18.1" viewBox="0 0 18.6 18.1"><rect x="3.800" y="7.600" width="11" height="3" fill="#fff"/></svg><div class="btn" style="left:1877.2px;top:204.3px;width:18.6px;height:18.1px;"></div><svg style="left:1877.2px;top:204.3px;" width="18.6" height="18.1" viewBox="0 0 18.6 18.1"><rect x="3.800" y="7.600" width="11" height="3" fill="#fff"/><rect x="7.800" y="3.600" width="3" height="11" fill="#fff"/></svg><div class="btn" style="left:1898.1px;top:204.3px;width:18.6px;height:18.1px;"></div><svg style="left:1898.1px;top:204.3px;" width="18.6" height="18.1" viewBox="0 0 18.6 18.1"><rect x="5.700" y="5.500" width="7.200" height="7.200" fill="#fff"/></svg><div class="t " style="left:1624.8px;top:226px;font-size:10.5px;letter-spacing:-0.091px;">Angle</div><div class="t " style="left:1849.7px;top:226px;transform:translateX(-100%);font-size:10.5px;letter-spacing:0.581px;margin-right:-0.581px;">0°</div><div class="" style="left:1624.8px;top:238.6px;width:225px;height:2px;background:#7a7a7a"></div><svg style="left:1732.3px;top:240.7px;" width="10" height="6.5" viewBox="0 0 10 6.5"><path d="M5 .8l4 5h-8z" fill="#fff" stroke="#000" stroke-width="1"/></svg><div class="btn" style="left:1856.1px;top:227.5px;width:18.6px;height:18.1px;"></div><svg style="left:1856.1px;top:227.5px;" width="18.6" height="18.1" viewBox="0 0 18.6 18.1"><path d="M5.100 9.20A4.300 4.300 0 1 1 7.250 13.22" fill="none" stroke="#fff" stroke-width="1.900"/><path d="M1.900 9.80L7.400 7.20L6.300 12.30z" fill="#fff"/></svg><div class="btn" style="left:1877.2px;top:227.5px;width:18.6px;height:18.1px;"></div><svg style="left:1877.2px;top:227.5px;" width="18.6" height="18.1" viewBox="0 0 18.6 18.1"><path d="M13.300 9.20A4.300 4.300 0 1 0 11.150 13.22" fill="none" stroke="#fff" stroke-width="1.900"/><path d="M16.500 9.80L11 7.20L12.100 12.30z" fill="#fff"/></svg><div class="btn" style="left:1898.1px;top:227.5px;width:18.6px;height:18.1px;"></div><svg style="left:1898.1px;top:227.5px;" width="18.6" height="18.1" viewBox="0 0 18.6 18.1"><rect x="5.700" y="5.500" width="7.200" height="7.200" fill="#fff"/></svg><div class="sep" style="left:1621px;top:256.3px;width:296px;height:1px;"></div><div class="" style="left:1761px;top:255px;width:16px;height:3px;background:#8c8c8c;border-radius:1.500px;box-shadow:3px 0 0 #f8f8f8,-3px 0 0 #f8f8f8"></div>
<svg style="left:1621px;top:264.8px;" width="9" height="6" viewBox="0 0 9 6"><path d="M.3 .5h8.400l-4.200 5z" fill="#7a3c1c"/></svg><div class="t " style="left:1632.8px;top:260.6px;font-size:12.5px;letter-spacing:-0.039px;color:#87492a">Layer Effect</div><div class="t " style="left:1630.4px;top:280.7px;font-size:12px;letter-spacing:-0.284px;">Paper</div><div class="dd" style="left:1688.3px;top:278.3px;width:225.3px;height:18.3px;"></div><div class="t " style="left:1693px;top:280.7px;font-size:12px;letter-spacing:0.654px;">[ No Texture ]</div><div class="btn" style="left:1897.5px;top:280.7px;width:14.3px;height:14px;"></div><svg style="left:1897.5px;top:280.7px;" width="14.3" height="14" viewBox="0 0 14.3 14"><path d="M4.25 5.6h5.800l-2.900 3.300z" fill="#fff"/></svg><div class="t " style="left:1630.4px;top:300.7px;font-size:12px;letter-spacing:0.257px;">Intensity</div><div class="sl" style="left:1688.3px;top:300.3px;width:182.4px;height:14.1px;"></div><div class="t " style="left:1866.3px;top:300.5px;transform:translateX(-100%);font-size:12px;letter-spacing:-0.173px;margin-right:0.173px;">0</div><div class="t " style="left:1630.4px;top:318.9px;font-size:12px;letter-spacing:-0.643px;">Scale</div><div class="sl" style="left:1688.3px;top:318.4px;width:225.3px;height:14px;"></div><div class="slf" style="left:1690.3px;top:320.4px;width:3.8px;height:10px;"></div><div class="t " style="left:1909.2px;top:318.6px;transform:translateX(-100%);font-size:12px;letter-spacing:0.161px;margin-right:-0.161px;">10%</div><div class="cb" style="left:1630.1px;top:336.6px;width:14.6px;height:14.2px;"></div><div class="t " style="left:1648.8px;top:336.5px;font-size:12px;letter-spacing:0.193px;">Apply to Linework</div><div class="t " style="left:1630.4px;top:361.7px;font-size:12px;letter-spacing:0.340px;">Effect</div><div class="dd" style="left:1688.3px;top:359.3px;width:225.3px;height:18.1px;"></div><div class="t " style="left:1693px;top:361.7px;font-size:12px;letter-spacing:0.636px;">[ No effect ]</div><div class="btn" style="left:1897.5px;top:361.3px;width:14.3px;height:14px;"></div><svg style="left:1897.5px;top:361.3px;" width="14.3" height="14" viewBox="0 0 14.3 14"><path d="M4.25 5.6h5.800l-2.900 3.300z" fill="#fff"/></svg><div class="t " style="left:1630.4px;top:381.5px;font-size:12px;letter-spacing:0.265px;">Width</div><div class="sl" style="left:1688.3px;top:381.4px;width:182.4px;height:14.3px;"></div><div class="slf" style="left:1690.3px;top:383.4px;width:11.6px;height:10.3px;"></div><div class="t " style="left:1866.3px;top:381.5px;transform:translateX(-100%);font-size:12px;letter-spacing:-0.673px;margin-right:0.673px;">1</div><div class="t " style="left:1630.4px;top:399.7px;font-size:12px;letter-spacing:0.257px;">Intensity</div><div class="sl" style="left:1688.3px;top:399.4px;width:182.4px;height:14.3px;"></div><div class="t " style="left:1866.3px;top:399.7px;transform:translateX(-100%);font-size:12px;letter-spacing:-0.173px;margin-right:0.173px;">0</div><div class="sep" style="left:1621px;top:422px;width:296px;height:1px;"></div><div class="t " style="left:1624.2px;top:428.8px;font-size:12px;letter-spacing:-0.104px;">Mode</div><div class="dd" style="left:1669.4px;top:426.3px;width:244.2px;height:18.1px;"></div><div class="t " style="left:1674.6px;top:428.6px;font-size:12px;letter-spacing:-0.262px;">Normal</div><div class="btn" style="left:1897.5px;top:428.3px;width:14.3px;height:14px;"></div><svg style="left:1897.5px;top:428.3px;" width="14.3" height="14" viewBox="0 0 14.3 14"><path d="M4.25 5.6h5.800l-2.900 3.300z" fill="#fff"/></svg><div class="t " style="left:1624.2px;top:450px;font-size:12px;letter-spacing:-0.069px;">Opacity</div><div class="sl" style="left:1669.4px;top:448.3px;width:244.2px;height:16.1px;"></div><div class="slf" style="left:1671.4px;top:450.3px;width:240.2px;height:12.100000000000001px;"></div><div class="t " style="left:1909.2px;top:449.7px;transform:translateX(-100%);font-size:12px;letter-spacing:0.202px;margin-right:-0.202px;">100%</div><div class="t " style="left:1624.2px;top:470.9px;font-size:12px;letter-spacing:-0.237px;">Lock</div><div class="tb" style="left:1669.3000000000002px;top:468.8px;width:18.2px;height:17.7px;background:#f6f6f6;border-color:#e2e2e2"></div><div class="tb" style="left:1690.3000000000002px;top:468.8px;width:18.2px;height:17.7px;background:#f6f6f6;border-color:#e2e2e2"></div><div class="tb" style="left:1711.5px;top:468.8px;width:18.2px;height:17.7px;background:#f6f6f6;border-color:#e2e2e2"></div><div class="tb" style="left:1732.4px;top:468.8px;width:18.2px;height:17.7px;background:#f6f6f6;border-color:#e2e2e2"></div><svg style="left:1669.4px;top:468.8px;" width="17.6" height="17.6" viewBox="0 0 17.6 17.6"><rect x="4" y="4" width="9.600" height="9.600" fill="#fff" stroke="#999" stroke-width=".9"/><rect x="4.500" y="4.500" width="4.300" height="4.300" fill="#d0d0d0"/><rect x="8.800" y="8.800" width="4.300" height="4.300" fill="#d0d0d0"/></svg><svg style="left:1690.4px;top:468.8px;" width="17.6" height="17.6" viewBox="0 0 17.6 17.6"><path d="M3.500 14.500l1-3.300 7.200-7.200 2.300 2.300-7.200 7.200z" fill="#fff" stroke="#555" stroke-width=".9"/><path d="M5 10.800l2.300 2.300" stroke="#777" stroke-width=".6"/></svg><svg style="left:1711.6px;top:468.8px;" width="17.6" height="17.6" viewBox="0 0 17.6 17.6"><path d="M8.800 3v11.600M3 8.800h11.600" stroke="#333" stroke-width="1.100"/><path d="M8.800 1.800l2 2.600h-4zM8.800 15.800l2-2.600h-4zM1.800 8.800l2.600-2v4zM15.800 8.800l-2.600-2v4z" fill="#333"/></svg><svg style="left:1732.5px;top:468.8px;" width="17.6" height="17.6" viewBox="0 0 17.6 17.6"><path d="M5.800 8v-2a3 3 0 0 1 6 0v2" fill="none" stroke="#777" stroke-width="1.500"/><rect x="4.300" y="7.800" width="9" height="6.800" rx=".8" fill="#777"/><rect x="8" y="9.800" width="1.600" height="3" fill="#fff"/></svg><div class="cb" style="left:1624.2px;top:490.3px;width:14.3px;height:14.3px;"></div><div class="t " style="left:1642.3px;top:490.6px;font-size:12px;letter-spacing:-0.203px;">Clipping Group</div><div class="cb" style="left:1728.1px;top:490.3px;width:14.3px;height:14.3px;border-radius:50%"></div><div class="t " style="left:1746.3px;top:490.6px;font-size:12px;letter-spacing:0.018px;">Selection Source</div>
<div class="" style="left:1621.4px;top:508.2px;width:295.4px;height:505px;background:#f8f8f8;border:1px solid #b9b9b9;border-radius:2px"></div><svg style="left:1630px;top:515px;" width="16" height="17" viewBox="0 0 16 17"><defs><linearGradient id="pgg" x1="0" y1="0" x2="1" y2="1"><stop offset=".45" stop-color="#fff"/><stop offset="1" stop-color="#c4c4c4"/></linearGradient></defs><path d="M.6 .6h9.800l4.200 4.200v11.400h-14z" fill="url(#pgg)" stroke="#8a8a8a" stroke-width=".9"/><path d="M10.400 .6v4.200h4.200" fill="#fff" stroke="#8a8a8a" stroke-width=".8"/></svg><svg style="left:1654.8px;top:514.5px;" width="18" height="18" viewBox="0 0 18 18"><defs><linearGradient id="pgh" x1="0" y1="0" x2="1" y2="1"><stop offset=".45" stop-color="#fff"/><stop offset="1" stop-color="#c4c4c4"/></linearGradient></defs><path d="M.6 1h10l3.900 3.800v12h-13.900z" fill="url(#pgh)" stroke="#8a8a8a" stroke-width=".9"/><path d="M3.300 15.400l4.300-8.200 2.900 2.700z" fill="#fff" stroke="#333" stroke-width=".8"/><path d="M3.300 15.400l4.600-5.300" stroke="#333" stroke-width=".7"/><path d="M8.200 6.400l3.200-4.200 3.900 3.500-3.200 4.200z" fill="#8a8a8a" stroke="#444" stroke-width=".7"/><path d="M9.800 4.300l3.900 3.500" stroke="#555" stroke-width=".6"/></svg><svg style="left:1680px;top:515px;" width="16" height="17" viewBox="0 0 16 17"><defs><linearGradient id="pgf" x1="0" y1="0" x2="1" y2="1"><stop offset="0" stop-color="#e6e6e6"/><stop offset="1" stop-color="#c6c6c6"/></linearGradient></defs><path d="M.6 2.200h2.600v14h-2.600z" fill="#e0e0e0" stroke="#a8a8a8" stroke-width=".8"/><path d="M3.200 .6h11.200v15.600h-13v-8l1.800-1.500z" fill="url(#pgf)" stroke="#a4a4a4" stroke-width=".9"/></svg><svg style="left:1727.8px;top:513.8px;" width="21" height="21" viewBox="0 0 21 21"><g stroke="#a0a0a0" stroke-width=".6" fill="none"><path d="M10 .500v18.500M.800 7.600h18.400"/><path d="M10 .800l-6.500 13M10 .800l6.500 13M.800 11.500l5 3.500h8.400l5-3.500" stroke-dasharray="1.800 1"/></g><path d="M14.400 16h5l-2.500 2.800z" fill="#111"/></svg><div class="" style="left:1892.1px;top:516.3px;width:17px;height:14.5px;background:#7c7c7c;border:1px solid #666"></div><div class="" style="left:1897.3px;top:520.2px;width:6.4px;height:6.4px;background:#fff;border-radius:50%"></div><svg style="left:1630px;top:538px;" width="16" height="17" viewBox="0 0 16 17"><rect x="3.500" y=".6" width="10" height="9" fill="#e8e8e8" stroke="#d0d0d0" stroke-width=".8"/><rect x=".6" y="6" width="13" height="10.400" fill="#ececec" stroke="#d4d4d4" stroke-width=".8"/><path d="M5.500 7.500h3.500v3.500h2.200l-4 4.200-4-4.200h2.300z" fill="#d0d0d0"/></svg><svg style="left:1654px;top:538px;" width="18" height="17" viewBox="0 0 18 17"><rect x="3.500" y="3.500" width="13.500" height="12.500" fill="#f0f0f0" stroke="#dcdcdc" stroke-width=".8"/><rect x=".6" y=".6" width="13.500" height="12.500" fill="#f6f6f6" stroke="#c8c8c8" stroke-width=".8" stroke-dasharray="1.600 1.200"/><path d="M7.300 3.500v6.600M4 6.800h6.600" stroke="#c4c4c4" stroke-width="1.600"/></svg><svg style="left:1680px;top:538px;" width="16" height="17" viewBox="0 0 16 17"><defs><linearGradient id="pgi" x1="0" y1="0" x2="1" y2="1"><stop offset=".45" stop-color="#fff"/><stop offset="1" stop-color="#c4c4c4"/></linearGradient></defs><path d="M.6 .600h10l4 3.800v12h-14z" fill="url(#pgi)" stroke="#8a8a8a" stroke-width=".9"/><g transform="translate(3.500 9) rotate(-35)"><rect x="0" y="0" width="11.500" height="5.500" rx="1" fill="#fff" stroke="#666" stroke-width=".7"/><rect x="4" y="0" width="7.500" height="5.500" rx=".8" fill="#7a7a7a"/></g></svg><svg style="left:1704.6px;top:538px;" width="16" height="17.5" viewBox="0 0 16 17.5"><defs><linearGradient id="trg" x1="0" x2="1"><stop offset="0" stop-color="#6e6e6e"/><stop offset=".5" stop-color="#a0a0a0"/><stop offset="1" stop-color="#6a6a6a"/></linearGradient></defs><path d="M1.800 5h12.400l-1.200 11.800h-10z" fill="url(#trg)" stroke="#5e5e5e" stroke-width=".7"/><rect x=".6" y="2.800" width="14.800" height="2.600" rx="1" fill="#7a7a7a" stroke="#5e5e5e" stroke-width=".5"/><path d="M5.800 2.800v-1.600h4.400v1.600" fill="none" stroke="#777" stroke-width="1.100"/><path d="M5.300 7l.5 8.500M8 7v8.500M10.700 7l-.5 8.500" stroke="#e0e0e0" stroke-width="1"/></svg><svg style="left:1890.8px;top:538px;" width="20" height="17" viewBox="0 0 20 17"><rect x=".500" y=".500" width="11.500" height="10" fill="#777" stroke="#555" stroke-width=".8"/><circle cx="6.200" cy="5.400" r="2.700" fill="#fff"/><rect x="7.800" y="7.500" width="11" height="9" fill="#f4f4f4" stroke="#555" stroke-width=".9"/><path d="M13.300 9.300v5.400M10.600 12h5.400" stroke="#333" stroke-width="1.600"/></svg><div class="" style="left:1623px;top:560.3px;width:276px;height:435.7px;background:#b0b0b0"></div><div class="sel" style="left:1629.4px;top:562.2px;width:263.7px;height:41.4px;border-radius:3px"></div><div class="" style="left:1634.2px;top:566.4000000000001px;width:18.7px;height:14.8px;background:#fff;border:1px solid #8c8ce6"></div><div class="" style="left:1634.2px;top:584.5px;width:18.7px;height:15px;background:#fff;border:1px solid #8c8ce6"></div><div class="" style="left:1656.3px;top:566.0px;width:33.3px;height:33.8px;background:#c4c4c4;border:1px solid #8c8ce6"></div><div class="" style="left:1660.5px;top:567.0px;width:25px;height:31.8px;background:#fff"></div><div class="t " style="left:1693.3px;top:564.8000000000001px;font-size:11.5px;letter-spacing:0.040px;">Layer3</div><div class="t " style="left:1693.3px;top:577.0px;font-size:10px;letter-spacing:-0.104px;line-height:13px">Normal</div><div class="t " style="left:1693.3px;top:588.0px;font-size:10px;letter-spacing:-0.320px;line-height:13px;-webkit-text-stroke:.2px #000;color:#000">100%</div><div class="" style="left:1630.1px;top:606.1px;width:262px;height:40px;background:#fff;border-radius:3px"></div><div class="" style="left:1634.2px;top:609.4000000000001px;width:18.7px;height:14.8px;background:#fff;border:1px solid #a8a8a8"></div><div class="" style="left:1634.2px;top:627.5px;width:18.7px;height:15px;background:#fff;border:1px solid #a8a8a8"></div><div class="" style="left:1656.3px;top:609.0px;width:33.3px;height:33.8px;background:#c4c4c4;border:1px solid #a8a8a8"></div><div class="" style="left:1660.5px;top:610.0px;width:25px;height:31.8px;background:#fff"></div><div class="t " style="left:1693.3px;top:608.07px;font-size:11.5px;letter-spacing:0.040px;">Layer2</div><div class="t " style="left:1693.3px;top:620.27px;font-size:10px;letter-spacing:-0.104px;line-height:13px">Normal</div><div class="t " style="left:1693.3px;top:631.27px;font-size:10px;letter-spacing:-0.320px;line-height:13px;-webkit-text-stroke:.2px #000;color:#000">100%</div><div class="" style="left:1630.1px;top:649.3px;width:262px;height:40px;background:#fff;border-radius:3px"></div><div class="" style="left:1634.2px;top:652.6px;width:18.7px;height:14.8px;background:#fff;border:1px solid #a8a8a8"></div><div class="" style="left:1634.2px;top:670.6999999999999px;width:18.7px;height:15px;background:#fff;border:1px solid #a8a8a8"></div><div class="" style="left:1656.3px;top:652.1999999999999px;width:33.3px;height:33.8px;background:#c4c4c4;border:1px solid #a8a8a8"></div><div class="" style="left:1660.5px;top:653.1999999999999px;width:25px;height:31.8px;background:linear-gradient(160deg,#d8d4cc 0%,#bdb8b0 45%,#a8a49c 70%,#c8c4bc 100%)"></div><svg style="left:1660.5px;top:653.1999999999999px;" width="25" height="31.8" viewBox="0 0 25 31.8"><defs><filter id="tb1"><feGaussianBlur stdDeviation="2"/></filter></defs><g filter="url(#tb1)"><ellipse cx="10" cy="27" rx="7" ry="4" fill="#6a6660" opacity=".7"/><ellipse cx="13" cy="14" rx="6" ry="8" fill="#a09c94" opacity=".7"/><ellipse cx="20" cy="6" rx="5" ry="5" fill="#e4e0d8" opacity=".8"/></g></svg><div class="t " style="left:1693.3px;top:651.27px;font-size:11.5px;letter-spacing:0.040px;">Layer1</div><div class="t " style="left:1693.3px;top:663.4699999999999px;font-size:10px;letter-spacing:-0.104px;line-height:13px">Normal</div><div class="t " style="left:1693.3px;top:674.4699999999999px;font-size:10px;letter-spacing:-0.334px;line-height:13px;-webkit-text-stroke:.2px #12946a;color:#12946a">16%</div><svg style="left:1634.2px;top:566.4px;" width="18.7" height="14.6" viewBox="0 0 18.7 14.6"><path d="M2.500 7.800C5 5 8 4.200 10.500 4.800c2.200.5 4 1.700 5.600 3.300-2 1.500-4 2.200-6.600 2.100-2.600-.1-4.800-1.100-7-2.400z" fill="#fff" stroke="#222" stroke-width=".8"/><circle cx="9.400" cy="7.400" r="2.200" fill="#111"/><path d="M2.300 6.300C5 3.600 8 2.800 10.800 3.200c2.300.4 4 1.400 5.400 2.800" fill="none" stroke="#222" stroke-width=".9"/><path d="M5 10.800l-.5.900M7.500 11.300l-.3 1M10 11.400v1M12.500 11l.4.900" stroke="#555" stroke-width=".5"/></svg><svg style="left:1634.2px;top:584.5px;" width="18.7" height="15" viewBox="0 0 18.7 15"><path d="M4.300 12.600l1-3 7.300-6.300 1.800 2-7.300 6.300z" fill="#fff" stroke="#444" stroke-width=".8"/><path d="M5.500 9.800l1.800 2" stroke="#666" stroke-width=".6"/></svg><svg style="left:1660.5px;top:610px;" width="25" height="31.8" viewBox="0 0 25 31.8"><g stroke="#e0e0e0" stroke-width=".6" fill="none"><path d="M5 4h3v3h-3zM12 3h3v3h-3zM6 9c2 1 4 1 6 0M13 8l3 2"/></g></svg><div class="" style="left:1899px;top:560.3px;width:17px;height:435.7px;background:#f1f1f1"></div><div class="" style="left:1900.3px;top:560.7px;width:14.3px;height:13.8px;background:#d6d6d6;border:1px solid #cbcbcb;border-radius:2.500px"></div><svg style="left:1900.3px;top:560.7px;" width="14.3" height="13.8" viewBox="0 0 14.3 13.8"><path d="M4.200 8.300l2.900-3.200 2.900 3.200z" fill="#fff"/></svg><div class="" style="left:1900.3px;top:981.7px;width:14.3px;height:13.8px;background:#d6d6d6;border:1px solid #cbcbcb;border-radius:2.500px"></div><svg style="left:1900.3px;top:981.7px;" width="14.3" height="13.8" viewBox="0 0 14.3 13.8"><path d="M4.200 5.400l2.900 3.200 2.900-3.200z" fill="#fff"/></svg><div class="" style="left:1623px;top:996px;width:276px;height:16.5px;background:#f1f1f1"></div><div class="" style="left:1623.9px;top:997.5px;width:14px;height:14px;background:#d6d6d6;border:1px solid #cbcbcb;border-radius:2.500px"></div><svg style="left:1623.9px;top:997.5px;" width="14" height="14" viewBox="0 0 14 14"><path d="M8.500 4l-3.200 2.900 3.200 2.900z" fill="#fff"/></svg><div class="" style="left:1884.2px;top:997.5px;width:14px;height:14px;background:#d6d6d6;border:1px solid #cbcbcb;border-radius:2.500px"></div><svg style="left:1884.2px;top:997.5px;" width="14" height="14" viewBox="0 0 14 14"><path d="M5.500 4l3.200 2.900-3.200 2.900z" fill="#fff"/></svg>
<!-- sec_status -->
<div class="t " style="left:1492px;top:1019.5px;font-size:12px;letter-spacing:-0.146px;">Memory Usage</div>
<div class="sl" style="left:1576.2px;top:1017.1px;width:123.4px;height:18.2px;background:#fbfbfb"></div>
<div class="" style="left:1578.3px;top:1019.2px;width:24.6px;height:14px;background:#4fd9a2"></div>
<div class="" style="left:1602.9px;top:1019.2px;width:6.3px;height:14px;background:#8c96ea"></div>
<div class="t " style="left:1579.7px;top:1019.2px;font-size:12px;letter-spacing:-0.295px;">20% (26%)</div>
<div class="t " style="left:1708.3px;top:1019.5px;font-size:12px;letter-spacing:-0.238px;">Drive Usage</div>
<div class="sl" style="left:1775.8px;top:1017.1px;width:123.9px;height:18.2px;background:#fbfbfb"></div>
<div class="" style="left:1777.9px;top:1019.2px;width:88.3px;height:14px;background:#40bfff"></div>
<div class="t " style="left:1779.9px;top:1019.2px;font-size:12px;letter-spacing:-0.472px;">74%</div>
</body></html>
